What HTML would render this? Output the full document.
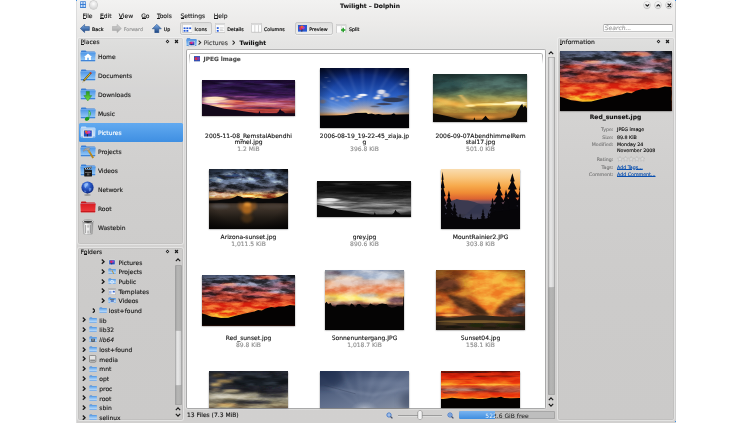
<!DOCTYPE html>
<html><head><meta charset="utf-8"><title>Twilight – Dolphin</title><style>
html,body{margin:0;padding:0;background:#fff}
body{-webkit-text-stroke:.12px currentColor;width:752px;height:423px;position:relative;overflow:hidden;font-family:"DejaVu Sans","Liberation Sans",sans-serif;font-size:6px;color:#161616;line-height:7px}
div,span,svg{position:absolute;box-sizing:border-box}
.t{white-space:nowrap;height:7px;line-height:7px}
.c{text-align:center}
.g{color:#8a8a8a}
.tb{font-size:4.75px;-webkit-text-stroke:.2px currentColor;color:#101010}
.in{font-size:4.9px}
u{text-decoration:underline;text-decoration-thickness:.45px;text-underline-offset:.3px}
#win{left:76.2px;top:0;width:599.9px;height:423px;background:linear-gradient(#f2f2f1 0,#ecebea 22px,#e4e4e3 45px,#dbdad9 100px,#d5d4d3 190px,#d2d1d0 300px,#d1d0cf 423px);border-left:.6px solid #dcdcdc;border-right:1.3px solid #cfcfcf}
.panel{border:.7px solid rgba(255,255,255,.45);border-radius:3px;box-shadow:0 0 0 .5px rgba(0,0,0,.1) inset;background:rgba(0,0,0,.027)}
.sel{background:linear-gradient(#62aaf0,#3f8fe2);border-radius:1.5px}
.pl{left:97px;color:#141414}
.thumb{box-shadow:0 0.5px 1.5px rgba(0,0,0,.55)}
.fn{width:112px;text-align:center;line-height:6.6px;color:#111}
.fn .g{position:static;color:#8c8c8c}
.lbl{right:138.6px;text-align:right;color:#777;white-space:nowrap;font-size:4.7px;line-height:6px}
.val{left:617px;white-space:nowrap;font-size:4.75px;line-height:6px;color:#111;-webkit-text-stroke:.15px currentColor}
a{color:#0a50b0;text-decoration:underline;text-decoration-thickness:.35px;text-underline-offset:.4px}
</style></head><body>
<div id="win"></div>
<div style="left:76px;top:0;width:1.4px;height:1.4px;background:#3a8ee6"></div><div style="left:675px;top:420.6px;width:1.2px;height:1.6px;background:#3a8ee6"></div><div style="left:675px;top:0;width:1.2px;height:1.4px;background:#3a8ee6"></div>
<div class="t " style="left:340px;top:2.00px;font-weight:bold;width:60px;text-align:center">Twilight – Dolphin</div>
<svg style="left:79.5px;top:1.3px" width="6" height="7.2" viewBox="0 0 13 15"><rect x="0" y="0" width="13" height="15" rx="1.5" fill="#3b7fd4"/><rect x="1.5" y="2" width="4" height="4" fill="#dbe9fb"/><rect x="7.5" y="2" width="4" height="4" fill="#dbe9fb"/><rect x="1.5" y="8.5" width="4" height="4" fill="#dbe9fb"/><rect x="7.5" y="8.5" width="4" height="4" fill="#dbe9fb"/></svg>
<div style="left:89.9px;top:1.4px;width:7.4px;height:7.4px;border-radius:50%;background:radial-gradient(circle at 50% 35%,#fdfdfd,#d9d9d9 70%,#bdbdbd);box-shadow:0 0 0 .5px #b0b0b0"></div>
<div style="left:643.7px;top:1.8px;width:6.6px;height:6.6px;border-radius:50%;background:radial-gradient(circle at 50% 30%,#fbfbfb,#e0e0e0 75%,#cdcdcd);box-shadow:0 0 0 .5px #bdbdbd,0 .8px .8px rgba(0,0,0,.25)"></div>
<svg style="left:643.7px;top:1.8px" width="6.6" height="6.6" viewBox="-3.6 -3.6 7.2 7.2"><path d="M-1.5,-0.6 L0,0.9 L1.5,-0.6" fill="none" stroke="#262626" stroke-width="1.35" stroke-linecap="round" stroke-linejoin="round"/></svg>
<div style="left:654.9000000000001px;top:1.8px;width:6.6px;height:6.6px;border-radius:50%;background:radial-gradient(circle at 50% 30%,#fbfbfb,#e0e0e0 75%,#cdcdcd);box-shadow:0 0 0 .5px #bdbdbd,0 .8px .8px rgba(0,0,0,.25)"></div>
<svg style="left:654.9000000000001px;top:1.8px" width="6.6" height="6.6" viewBox="-3.6 -3.6 7.2 7.2"><path d="M-1.5,0.7 L0,-0.8 L1.5,0.7" fill="none" stroke="#262626" stroke-width="1.35" stroke-linecap="round" stroke-linejoin="round"/></svg>
<div style="left:665.9000000000001px;top:1.8px;width:6.6px;height:6.6px;border-radius:50%;background:radial-gradient(circle at 50% 30%,#fbfbfb,#e0e0e0 75%,#cdcdcd);box-shadow:0 0 0 .5px #bdbdbd,0 .8px .8px rgba(0,0,0,.25)"></div>
<svg style="left:665.9000000000001px;top:1.8px" width="6.6" height="6.6" viewBox="-3.6 -3.6 7.2 7.2"><path d="M-1.4,-1.4 L1.4,1.4 M1.4,-1.4 L-1.4,1.4" fill="none" stroke="#262626" stroke-width="1.35" stroke-linecap="round" stroke-linejoin="round"/></svg>
<div class="t " style="left:82.5px;top:12.10px;">File</div>
<div style="left:82.80px;top:18.45px;width:2.95px;height:.5px;background:#161616"></div>
<div class="t " style="left:100px;top:12.10px;">Edit</div>
<div style="left:100.30px;top:18.45px;width:3.30px;height:.5px;background:#161616"></div>
<div class="t " style="left:118.8px;top:12.10px;">View</div>
<div style="left:119.10px;top:18.45px;width:3.60px;height:.5px;background:#161616"></div>
<div class="t " style="left:141.2px;top:12.10px;">Go</div>
<div style="left:141.50px;top:18.45px;width:4.15px;height:.5px;background:#161616"></div>
<div class="t " style="left:157px;top:12.10px;">Tools</div>
<div style="left:157.30px;top:18.45px;width:3.17px;height:.5px;background:#161616"></div>
<div class="t " style="left:180.5px;top:12.10px;">Settings</div>
<div style="left:180.80px;top:18.45px;width:3.30px;height:.5px;background:#161616"></div>
<div class="t " style="left:213.8px;top:12.10px;">Help</div>
<div style="left:214.10px;top:18.45px;width:4.00px;height:.5px;background:#161616"></div>
<svg style="left:80px;top:23.8px" width="9.7" height="9" viewBox="0 0 9.7 9"><defs><linearGradient id="gleft" x1="0" y1="0" x2="0" y2="1"><stop offset="0" stop-color="#7fb0ea"/><stop offset="1" stop-color="#17407f"/></linearGradient></defs><path d="M0.3,4.5 L4.6,0.4 L4.6,2.6 L9.4,2.6 L9.4,6.4 L4.6,6.4 L4.6,8.6 Z" fill="url(#gleft)" stroke="#17407f" stroke-width="0.5" stroke-linejoin="round"/></svg>
<div class="t tb" style="left:92px;top:25.80px;">Back</div>
<svg style="left:112px;top:23.8px" width="9.7" height="9" viewBox="0 0 9.7 9"><defs><linearGradient id="gright" x1="0" y1="0" x2="0" y2="1"><stop offset="0" stop-color="#d6d6d6"/><stop offset="1" stop-color="#a2a2a2"/></linearGradient></defs><path d="M9.4,4.5 L5.1,0.4 L5.1,2.6 L0.3,2.6 L0.3,6.4 L5.1,6.4 L5.1,8.6 Z" fill="url(#gright)" stroke="#a2a2a2" stroke-width="0.5" stroke-linejoin="round"/></svg>
<div class="t tb g" style="left:123.8px;top:25.80px;color:#9a9a9a">Forward</div>
<svg style="left:152px;top:23.8px" width="9.7" height="9" viewBox="0 0 9.7 9"><defs><linearGradient id="gup" x1="0" y1="0" x2="0" y2="1"><stop offset="0" stop-color="#7fb0ea"/><stop offset="1" stop-color="#17407f"/></linearGradient></defs><path d="M4.8,0.3 L9.3,4.8 L6.8,4.8 L6.8,8.8 L2.8,8.8 L2.8,4.8 L0.3,4.8 Z" fill="url(#gup)" stroke="#17407f" stroke-width="0.5" stroke-linejoin="round"/></svg>
<div class="t tb" style="left:163.8px;top:25.80px;">Up</div>
<div style="left:180.4px;top:21.6px;width:31.2px;height:13.1px;border:.6px solid #c6c6c6;border-radius:2.2px;background:linear-gradient(#dddddc,#e9e9e8 60%,#ececeb);box-shadow:0 .6px 0 rgba(255,255,255,.7)"></div>
<svg style="left:181.7px;top:23.1px" width="10.6" height="9.9" viewBox="0 0 10.6 9.9"><rect x=".3" y=".3" width="10.0" height="9.3" rx=".6" fill="#fdfdfd" stroke="#ababab" stroke-width=".6"/><rect x=".6" y=".6" width="9.4" height="1.5" fill="#d9d9d9"/><rect x="1.6" y="4.4" width="1.9" height="1.7" fill="#1f56d8"/><rect x="4.4" y="4.4" width="1.9" height="1.7" fill="#1f56d8"/><rect x="7.2" y="4.4" width="1.9" height="1.7" fill="#1f56d8"/><rect x="1.6" y="7" width="1.9" height="1.7" fill="#1f56d8"/><rect x="4.4" y="7" width="1.9" height="1.7" fill="#1f56d8"/></svg>
<div class="t tb" style="left:194.5px;top:25.80px;">Icons</div>
<svg style="left:215px;top:23.1px" width="10.4" height="9.9" viewBox="0 0 10.4 9.9"><rect x=".3" y=".3" width="9.8" height="9.3" rx=".6" fill="#fdfdfd" stroke="#ababab" stroke-width=".6"/><rect x=".6" y=".6" width="9.200000000000001" height="1.5" fill="#d9d9d9"/><rect x="1.8" y="4.2" width="1.9" height="1.7" fill="#1f56d8"/><rect x="1.8" y="7" width="1.9" height="1.7" fill="#1f56d8"/><rect x="4.8" y="4.6" width="3.8" height=".7" fill="#b8b8b8"/><rect x="4.8" y="6" width="3" height=".6" fill="#cfcfcf"/><rect x="4.8" y="7.4" width="3.8" height=".7" fill="#b8b8b8"/></svg>
<div class="t tb" style="left:227.2px;top:25.80px;">Details</div>
<svg style="left:251.4px;top:23.4px" width="10.9" height="9.6" viewBox="0 0 10.9 9.6"><rect x=".3" y=".3" width="10.3" height="9.0" rx=".6" fill="#fdfdfd" stroke="#ababab" stroke-width=".6"/><rect x=".6" y=".6" width="9.700000000000001" height="1.5" fill="#d9d9d9"/><rect x="3.6" y="2.1" width=".6" height="7.2" fill="#bdbdbd"/><rect x="7" y="2.1" width=".6" height="7.2" fill="#bdbdbd"/></svg>
<div class="t tb" style="left:264px;top:25.80px;">Columns</div>
<div style="left:295.4px;top:21.8px;width:37.5px;height:12.9px;border:.6px solid #c6c6c6;border-radius:2.2px;background:linear-gradient(#dddddc,#e9e9e8 60%,#ececeb);box-shadow:0 .6px 0 rgba(255,255,255,.7)"></div>
<svg style="left:297.5px;top:24.6px" width="9.2" height="7.8" viewBox="0 0 9.2 7.8"><rect width="9.2" height="7.8" fill="#2858d0"/><rect y="6.6" width="9.2" height="1.2" fill="#dfe6f4"/><circle cx="3" cy="3" r="1.9" fill="#d8305a"/><circle cx="5.2" cy="2.6" r="1.7" fill="#b838b8"/><circle cx="4" cy="1.8" r="1.2" fill="#e8682a"/><path d="M4,4.4L3.8,6.8" stroke="#2a1414" stroke-width=".7"/></svg>
<div class="t tb" style="left:309.2px;top:25.80px;">Preview</div>
<svg style="left:336.4px;top:23.5px" width="10.2" height="9.6" viewBox="0 0 10.2 9.6"><rect x=".3" y=".3" width="9.6" height="9.0" rx=".6" fill="#fdfdfd" stroke="#ababab" stroke-width=".6"/><rect x=".6" y=".6" width="9.0" height="1.5" fill="#d9d9d9"/><rect x="4.9" y="2.1" width=".6" height="7.2" fill="#c4c4c4"/><path d="M7.2,3.8V8.2M5,6H9.4" stroke="#1f9a22" stroke-width="1.4"/></svg>
<div class="t tb" style="left:348.9px;top:25.80px;">Split</div>
<div style="left:603.2px;top:24px;width:69.5px;height:8.2px;background:#fff;border:.6px solid #c4c4c4;border-top-color:#a4a4a4;border-radius:1.5px;box-shadow:0 .5px 0 #f4f4f4"></div>
<div class="t g" style="left:604.8px;top:24.30px;font-style:italic;color:#9a9a9a">Search...</div>
<div class="panel" style="left:77.4px;top:37.2px;width:106.4px;height:208px"></div>
<div class="t " style="left:80.5px;top:38.30px;">Places</div>
<div style="left:80.80px;top:44.45px;width:3.10px;height:.5px;background:#161616"></div>
<svg style="left:165.0px;top:39.3px;filter:drop-shadow(0 .6px .5px rgba(255,255,255,.95))" width="5" height="5" viewBox="-2.5 -2.5 5 5"><path d="M0,-1.9L1.9,0L0,1.9L-1.9,0Z" fill="#2a2a2a"/><circle r=".6" fill="#e6e6e6"/></svg>
<svg style="left:174.0px;top:39.3px;filter:drop-shadow(0 .6px .5px rgba(255,255,255,.95))" width="5" height="5" viewBox="-2.5 -2.5 5 5"><path d="M-1.5,-1.5L1.5,1.5M1.5,-1.5L-1.5,1.5" stroke="#1e1e1e" stroke-width="1.1"/><rect x="-.8" y="-.8" width="1.6" height="1.6" fill="#1e1e1e"/></svg>
<div class="sel" style="left:78.8px;top:123px;width:103.8px;height:18.8px"></div>
<svg style="left:80.4px;top:50.0px" width="16" height="14.4" viewBox="0 0 16 14.4"><defs><linearGradient id="fg1" x1="0" y1="0" x2="0" y2="1"><stop offset="0" stop-color="#4a94e6"/><stop offset="1" stop-color="#9ccdf8"/></linearGradient></defs><path d="M1,1.3Q1,.4 1.9,.4L5.6,.4L6.6,1.5L14.3,1.5Q15.2,1.5 15.2,2.3L15.2,4L1,4Z" fill="#3a7fd6"/><path d="M.4,2.9Q.4,2.3 1,2.3L15,2.3Q15.6,2.3 15.6,2.9L15.2,10.7Q15.2,11.3 14.6,11.3L1.4,11.3Q.8,11.3 .8,10.7Z" fill="url(#fg1)"/><path d="M.82,10.1L15.18,10.1L15.2,10.7Q15.2,11.3 14.6,11.3L1.4,11.3Q.8,11.3 .8,10.7Z" fill="#3f84d8"/><path d="M.5,2.5H15.5" stroke="#b4d6f8" stroke-width=".5" opacity=".7"/><path d="M8,3.6L12,7H10.9V10H9V7.8H7V10H5.1V7H4Z" fill="#fff"/></svg>
<div class="t " style="left:97.9px;top:53.40px;">Home</div>
<svg style="left:80.4px;top:69.0px" width="16" height="14.4" viewBox="0 0 16 14.4"><defs><linearGradient id="fg2" x1="0" y1="0" x2="0" y2="1"><stop offset="0" stop-color="#4a94e6"/><stop offset="1" stop-color="#9ccdf8"/></linearGradient></defs><path d="M1,1.3Q1,.4 1.9,.4L5.6,.4L6.6,1.5L14.3,1.5Q15.2,1.5 15.2,2.3L15.2,4L1,4Z" fill="#3a7fd6"/><path d="M.4,2.9Q.4,2.3 1,2.3L15,2.3Q15.6,2.3 15.6,2.9L15.2,10.7Q15.2,11.3 14.6,11.3L1.4,11.3Q.8,11.3 .8,10.7Z" fill="url(#fg2)"/><path d="M.82,10.1L15.18,10.1L15.2,10.7Q15.2,11.3 14.6,11.3L1.4,11.3Q.8,11.3 .8,10.7Z" fill="#3f84d8"/><path d="M.5,2.5H15.5" stroke="#b4d6f8" stroke-width=".5" opacity=".7"/><path d="M2.6,13.4L3.6,10.6L10,3.4L11.4,4.6L5,11.8Z" fill="#3a2c10"/><path d="M3.9,10.9L10,4L10.8,4.7L4.7,11.6Z" fill="#e8c428"/><path d="M9.6,3.8L10.4,2.9L11.9,4.1L11.1,5Z" fill="#d82a20"/><path d="M2.6,13.4L3.2,11.6L4.2,12.4Z" fill="#e8d8a0"/></svg>
<div class="t " style="left:97.9px;top:72.40px;">Documents</div>
<svg style="left:80.4px;top:87.89999999999999px" width="16" height="14.4" viewBox="0 0 16 14.4"><defs><linearGradient id="fg3" x1="0" y1="0" x2="0" y2="1"><stop offset="0" stop-color="#4a94e6"/><stop offset="1" stop-color="#9ccdf8"/></linearGradient></defs><path d="M1,1.3Q1,.4 1.9,.4L5.6,.4L6.6,1.5L14.3,1.5Q15.2,1.5 15.2,2.3L15.2,4L1,4Z" fill="#3a7fd6"/><path d="M.4,2.9Q.4,2.3 1,2.3L15,2.3Q15.6,2.3 15.6,2.9L15.2,10.7Q15.2,11.3 14.6,11.3L1.4,11.3Q.8,11.3 .8,10.7Z" fill="url(#fg3)"/><path d="M.82,10.1L15.18,10.1L15.2,10.7Q15.2,11.3 14.6,11.3L1.4,11.3Q.8,11.3 .8,10.7Z" fill="#3f84d8"/><path d="M.5,2.5H15.5" stroke="#b4d6f8" stroke-width=".5" opacity=".7"/><defs><linearGradient id="dlg" x1="0" y1="0" x2="0" y2="1"><stop offset="0" stop-color="#2a961c"/><stop offset="1" stop-color="#74e048"/></linearGradient></defs><path d="M6.2,3.4H9.4V7.6H11.8L7.8,13L3.8,7.6H6.2Z" fill="url(#dlg)" stroke="#1f8414" stroke-width=".4"/></svg>
<div class="t " style="left:97.9px;top:91.30px;">Downloads</div>
<svg style="left:80.4px;top:106.8px" width="16" height="14.4" viewBox="0 0 16 14.4"><defs><linearGradient id="fg4" x1="0" y1="0" x2="0" y2="1"><stop offset="0" stop-color="#4a94e6"/><stop offset="1" stop-color="#9ccdf8"/></linearGradient></defs><path d="M1,1.3Q1,.4 1.9,.4L5.6,.4L6.6,1.5L14.3,1.5Q15.2,1.5 15.2,2.3L15.2,4L1,4Z" fill="#3a7fd6"/><path d="M.4,2.9Q.4,2.3 1,2.3L15,2.3Q15.6,2.3 15.6,2.9L15.2,10.7Q15.2,11.3 14.6,11.3L1.4,11.3Q.8,11.3 .8,10.7Z" fill="url(#fg4)"/><path d="M.82,10.1L15.18,10.1L15.2,10.7Q15.2,11.3 14.6,11.3L1.4,11.3Q.8,11.3 .8,10.7Z" fill="#3f84d8"/><path d="M.5,2.5H15.5" stroke="#b4d6f8" stroke-width=".5" opacity=".7"/><path d="M8.6,3.2L9.4,3.2Q11.6,5.6 10.4,9.2Q10.2,6.8 9.4,6.2L9.4,11.6A2.2,1.7 -20 1 1 8.6,10.2Z" fill="#2fae2f"/><path d="M8.9,4Q10.6,6 10,8.4Q9.8,6.4 8.9,5.8Z" fill="#a8ecA0"/><ellipse cx="7" cy="12" rx="2.2" ry="1.6" transform="rotate(-20 7 12)" fill="#1f9a1f"/></svg>
<div class="t " style="left:97.9px;top:110.20px;">Music</div>
<svg style="left:80.4px;top:125.69999999999999px" width="16" height="14.4" viewBox="0 0 16 14.4"><defs><linearGradient id="fg5" x1="0" y1="0" x2="0" y2="1"><stop offset="0" stop-color="#a8cef6"/><stop offset="1" stop-color="#d4e8fc"/></linearGradient></defs><path d="M1,1.3Q1,.4 1.9,.4L5.6,.4L6.6,1.5L14.3,1.5Q15.2,1.5 15.2,2.3L15.2,4L1,4Z" fill="#c4ddf8"/><path d="M.4,2.9Q.4,2.3 1,2.3L15,2.3Q15.6,2.3 15.6,2.9L15.2,10.7Q15.2,11.3 14.6,11.3L1.4,11.3Q.8,11.3 .8,10.7Z" fill="url(#fg5)"/><path d="M.82,10.1L15.18,10.1L15.2,10.7Q15.2,11.3 14.6,11.3L1.4,11.3Q.8,11.3 .8,10.7Z" fill="#9cc4f2"/><path d="M.5,2.5H15.5" stroke="#b4d6f8" stroke-width=".5" opacity=".7"/><rect x="3" y="3.6" width="9.6" height="8" fill="#fafafa" stroke="#b8c4d4" stroke-width=".3"/><rect x="3.8" y="4.4" width="8" height="6.2" fill="#2450bc"/><circle cx="7" cy="6.6" r="1.7" fill="#e0306a"/><circle cx="9" cy="6.2" r="1.5" fill="#c040c8"/><circle cx="6" cy="5.6" r="1.1" fill="#e86a28"/><path d="M7.6,8L7.4,10.4" stroke="#301818" stroke-width=".7"/></svg>
<div class="t " style="left:97.9px;top:129.10px;color:#fff">Pictures</div>
<svg style="left:80.4px;top:144.6px" width="16" height="14.4" viewBox="0 0 16 14.4"><defs><linearGradient id="fg6" x1="0" y1="0" x2="0" y2="1"><stop offset="0" stop-color="#4a94e6"/><stop offset="1" stop-color="#9ccdf8"/></linearGradient></defs><path d="M1,1.3Q1,.4 1.9,.4L5.6,.4L6.6,1.5L14.3,1.5Q15.2,1.5 15.2,2.3L15.2,4L1,4Z" fill="#3a7fd6"/><path d="M.4,2.9Q.4,2.3 1,2.3L15,2.3Q15.6,2.3 15.6,2.9L15.2,10.7Q15.2,11.3 14.6,11.3L1.4,11.3Q.8,11.3 .8,10.7Z" fill="url(#fg6)"/><path d="M.82,10.1L15.18,10.1L15.2,10.7Q15.2,11.3 14.6,11.3L1.4,11.3Q.8,11.3 .8,10.7Z" fill="#3f84d8"/><path d="M.5,2.5H15.5" stroke="#b4d6f8" stroke-width=".5" opacity=".7"/><path d="M7.4,5.2L8.8,4.2L14,12.6L12.4,13.6Z" fill="#b8861e"/><path d="M7.4,5.2L8.8,4.2L10.4,6.8L9,7.8Z" fill="#caa040"/><path d="M3,5.6Q5.4,2.6 9.4,2.6L10,3.6L8,6L6.4,5Q4.6,5.2 3.6,6.4Z" fill="#a8a8a8" stroke="#6a6a6a" stroke-width=".3"/></svg>
<div class="t " style="left:97.9px;top:148.00px;">Projects</div>
<svg style="left:80.4px;top:163.5px" width="16" height="14.4" viewBox="0 0 16 14.4"><defs><linearGradient id="fg7" x1="0" y1="0" x2="0" y2="1"><stop offset="0" stop-color="#4a94e6"/><stop offset="1" stop-color="#9ccdf8"/></linearGradient></defs><path d="M1,1.3Q1,.4 1.9,.4L5.6,.4L6.6,1.5L14.3,1.5Q15.2,1.5 15.2,2.3L15.2,4L1,4Z" fill="#3a7fd6"/><path d="M.4,2.9Q.4,2.3 1,2.3L15,2.3Q15.6,2.3 15.6,2.9L15.2,10.7Q15.2,11.3 14.6,11.3L1.4,11.3Q.8,11.3 .8,10.7Z" fill="url(#fg7)"/><path d="M.82,10.1L15.18,10.1L15.2,10.7Q15.2,11.3 14.6,11.3L1.4,11.3Q.8,11.3 .8,10.7Z" fill="#3f84d8"/><path d="M.5,2.5H15.5" stroke="#b4d6f8" stroke-width=".5" opacity=".7"/><rect x="4.2" y="5.8" width="7.8" height="6.6" rx=".4" fill="#181818"/><path d="M3.8,4.2L11.4,2.4L11.9,4.2L4.3,6Z" fill="#181818"/><path d="M5.2,3.9L6,5.6M7,3.5L7.8,5.2M8.8,3.1L9.6,4.8M10.6,2.7L11.2,4.3" stroke="#f4f4f4" stroke-width=".8"/><rect x="5" y="8" width="6.2" height=".7" fill="#8a8a8a"/><rect x="7" y="9.4" width="2.4" height="2" fill="#5a5a5a"/></svg>
<div class="t " style="left:97.9px;top:166.90px;">Videos</div>
<svg style="left:81.4px;top:181.2px" width="13" height="15" viewBox="0 0 13 15"><defs><radialGradient id="gl" cx=".42" cy=".3" r=".75"><stop offset="0" stop-color="#6ea4f4"/><stop offset=".45" stop-color="#2452c0"/><stop offset="1" stop-color="#0c2478"/></radialGradient></defs><ellipse cx="6.5" cy="14" rx="3.4" ry=".7" fill="#7a7a7a" opacity=".8"/><rect x="5.8" y="12.2" width="1.4" height="1.6" fill="#9a9a9a"/><circle cx="6.5" cy="6.5" r="6.1" fill="url(#gl)"/><path d="M3.2,3.4Q5,1.6 7,2.2Q7.8,3.6 6.2,4.8Q4.8,5.4 4.6,7.2Q3.2,6.2 3.2,3.4Z" fill="#a8ccff" opacity=".7"/><path d="M7.8,6.8Q9.8,6.4 10.6,7.8Q10,10 8.4,10.6Q7.4,9 7.8,6.8Z" fill="#8cbcff" opacity=".55"/><path d="M3,9.6Q4.6,9.4 5.4,10.8Q4.8,11.8 3.8,11.4Z" fill="#8cbcff" opacity=".5"/></svg>
<div class="t " style="left:97.9px;top:185.80px;">Network</div>
<svg style="left:80.4px;top:201.29999999999998px" width="16" height="14.4" viewBox="0 0 16 14.4"><defs><linearGradient id="fg8" x1="0" y1="0" x2="0" y2="1"><stop offset="0" stop-color="#d81c22"/><stop offset="1" stop-color="#ee3a3c"/></linearGradient></defs><path d="M1,1.3Q1,.4 1.9,.4L5.6,.4L6.6,1.5L14.3,1.5Q15.2,1.5 15.2,2.3L15.2,4L1,4Z" fill="#c8141a"/><path d="M.4,2.9Q.4,2.3 1,2.3L15,2.3Q15.6,2.3 15.6,2.9L15.2,10.7Q15.2,11.3 14.6,11.3L1.4,11.3Q.8,11.3 .8,10.7Z" fill="url(#fg8)"/><path d="M.82,10.1L15.18,10.1L15.2,10.7Q15.2,11.3 14.6,11.3L1.4,11.3Q.8,11.3 .8,10.7Z" fill="#c8181c"/><path d="M.5,2.5H15.5" stroke="#b4d6f8" stroke-width=".5" opacity=".7"/></svg>
<div class="t " style="left:97.9px;top:204.70px;">Root</div>
<svg style="left:82.4px;top:219.4px" width="12" height="16" viewBox="0 0 12 16"><defs><linearGradient id="wb" x1="0" x2="1" y1="0" y2="0"><stop offset="0" stop-color="#a8a8a8"/><stop offset=".3" stop-color="#fbfbfb"/><stop offset=".65" stop-color="#d8d8d8"/><stop offset="1" stop-color="#8a8a8a"/></linearGradient></defs><path d="M.8,2.6L11.2,2.6L10.2,15Q6,16 1.8,15Z" fill="url(#wb)" stroke="#8a8a8a" stroke-width=".4"/><ellipse cx="6" cy="2.6" rx="5.4" ry="1.8" fill="#ececec" stroke="#6a6a6a" stroke-width=".5"/><ellipse cx="6" cy="2.8" rx="4.2" ry="1.1" fill="#3a3a3a"/><path d="M3.6,6V14M6,6.2V14.4M8.4,6V14" stroke="#8a8a8a" stroke-width=".8"/><rect x="4.8" y="8.6" width="2.4" height="3" fill="#fff" opacity=".7"/></svg>
<div class="t " style="left:97.9px;top:223.60px;">Wastebin</div>
<div class="panel" style="left:77.4px;top:246.6px;width:106.4px;height:174.8px"></div>
<div class="t " style="left:80.5px;top:248.00px;">Folders</div>
<div style="left:84.25px;top:254.45px;width:3.17px;height:.5px;background:#161616"></div>
<svg style="left:165.0px;top:249.0px;filter:drop-shadow(0 .6px .5px rgba(255,255,255,.95))" width="5" height="5" viewBox="-2.5 -2.5 5 5"><path d="M0,-1.9L1.9,0L0,1.9L-1.9,0Z" fill="#2a2a2a"/><circle r=".6" fill="#e6e6e6"/></svg>
<svg style="left:174.0px;top:249.0px;filter:drop-shadow(0 .6px .5px rgba(255,255,255,.95))" width="5" height="5" viewBox="-2.5 -2.5 5 5"><path d="M-1.5,-1.5L1.5,1.5M1.5,-1.5L-1.5,1.5" stroke="#1e1e1e" stroke-width="1.1"/><rect x="-.8" y="-.8" width="1.6" height="1.6" fill="#1e1e1e"/></svg>
<svg style="left:101.2px;top:259.3px" width="3.9" height="5.4" viewBox="0 0 3.4 4.8"><path d="M.7,.5L2.7,2.4L.7,4.3" fill="none" stroke="#1c1c1c" stroke-width="1.15"/></svg>
<svg style="left:108.2px;top:258.5px" width="8" height="7" viewBox="0 0 16 14"><rect x=".6" y=".6" width="14.8" height="12.8" rx="1" fill="#f4f4f4" stroke="#a8a8a8" stroke-width=".9"/><rect x="2.4" y="2.4" width="11.2" height="8.6" fill="#2450bc"/><circle cx="6.6" cy="5.6" r="2.6" fill="#d82a5a"/><circle cx="9.8" cy="5.2" r="2.2" fill="#a83ac0"/><path d="M7.6,8L7.4,11" stroke="#301818" stroke-width="1.2"/></svg>
<div class="t " style="left:118.5px;top:258.50px;">Pictures</div>
<svg style="left:101.2px;top:269.05px" width="3.9" height="5.4" viewBox="0 0 3.4 4.8"><path d="M.7,.5L2.7,2.4L.7,4.3" fill="none" stroke="#1c1c1c" stroke-width="1.15"/></svg>
<svg style="left:108px;top:268.45px" width="8.2" height="6.6" viewBox="0 0 16 12"><defs><linearGradient id="fg9" x1="0" y1="0" x2="0" y2="1"><stop offset="0" stop-color="#62a6ec"/><stop offset="1" stop-color="#d2e8fc"/></linearGradient></defs><path d="M1,1.3Q1,.4 1.9,.4L5.6,.4L6.6,1.5L14.3,1.5Q15.2,1.5 15.2,2.3L15.2,4L1,4Z" fill="#3a7fd6"/><path d="M.4,2.9Q.4,2.3 1,2.3L15,2.3Q15.6,2.3 15.6,2.9L15.2,10.7Q15.2,11.3 14.6,11.3L1.4,11.3Q.8,11.3 .8,10.7Z" fill="url(#fg9)"/><path d="M.82,10.1L15.18,10.1L15.2,10.7Q15.2,11.3 14.6,11.3L1.4,11.3Q.8,11.3 .8,10.7Z" fill="#3f84d8"/><path d="M.5,2.5H15.5" stroke="#b4d6f8" stroke-width=".5" opacity=".7"/><path d="M3.4,4.6Q5.4,2.6 8.6,2.8L9,3.8L7.2,5.6L6,4.8Q4.6,5 4,5.8Z" fill="#c8c8c8" stroke="#6a6a6a" stroke-width=".4"/><path d="M7.2,5L8.6,4.2L12,10.4L10.6,11.2Z" fill="#b8861e"/></svg>
<div class="t " style="left:118.5px;top:268.25px;">Projects</div>
<svg style="left:101.2px;top:278.6px" width="3.9" height="5.4" viewBox="0 0 3.4 4.8"><path d="M.7,.5L2.7,2.4L.7,4.3" fill="none" stroke="#1c1c1c" stroke-width="1.15"/></svg>
<svg style="left:108px;top:278.0px" width="8.2" height="6.6" viewBox="0 0 16 12"><defs><linearGradient id="fg10" x1="0" y1="0" x2="0" y2="1"><stop offset="0" stop-color="#62a6ec"/><stop offset="1" stop-color="#d2e8fc"/></linearGradient></defs><path d="M1,1.3Q1,.4 1.9,.4L5.6,.4L6.6,1.5L14.3,1.5Q15.2,1.5 15.2,2.3L15.2,4L1,4Z" fill="#3a7fd6"/><path d="M.4,2.9Q.4,2.3 1,2.3L15,2.3Q15.6,2.3 15.6,2.9L15.2,10.7Q15.2,11.3 14.6,11.3L1.4,11.3Q.8,11.3 .8,10.7Z" fill="url(#fg10)"/><path d="M.82,10.1L15.18,10.1L15.2,10.7Q15.2,11.3 14.6,11.3L1.4,11.3Q.8,11.3 .8,10.7Z" fill="#3f84d8"/><path d="M.5,2.5H15.5" stroke="#b4d6f8" stroke-width=".5" opacity=".7"/><circle cx="8" cy="7" r="2.9" fill="none" stroke="#eef5ff" stroke-width="1.5"/><circle cx="8" cy="7" r=".9" fill="#eef5ff"/></svg>
<div class="t " style="left:118.5px;top:277.80px;">Public</div>
<svg style="left:101.2px;top:288.3px" width="3.9" height="5.4" viewBox="0 0 3.4 4.8"><path d="M.7,.5L2.7,2.4L.7,4.3" fill="none" stroke="#1c1c1c" stroke-width="1.15"/></svg>
<svg style="left:108.2px;top:287.5px" width="8" height="7" viewBox="0 0 16 14"><rect x=".6" y=".6" width="14.8" height="12.8" rx="1" fill="#f8f8f8" stroke="#8a8a8a" stroke-width=".9"/><rect x="1.2" y="1.2" width="13.6" height="2.2" fill="#9a9a9a"/><path d="M4,5.4V11.4" stroke="#3a6ad0" stroke-width="1.8"/><path d="M7.4,5.4V11.4" stroke="#9cbcf0" stroke-width="1.4"/><rect x="9.6" y="5.6" width="4" height="3.4" fill="#3a6ad0"/></svg>
<div class="t " style="left:118.5px;top:287.50px;">Templates</div>
<svg style="left:101.2px;top:298.05px" width="3.9" height="5.4" viewBox="0 0 3.4 4.8"><path d="M.7,.5L2.7,2.4L.7,4.3" fill="none" stroke="#1c1c1c" stroke-width="1.15"/></svg>
<svg style="left:108px;top:297.45px" width="8.2" height="6.6" viewBox="0 0 16 12"><defs><linearGradient id="fg11" x1="0" y1="0" x2="0" y2="1"><stop offset="0" stop-color="#62a6ec"/><stop offset="1" stop-color="#d2e8fc"/></linearGradient></defs><path d="M1,1.3Q1,.4 1.9,.4L5.6,.4L6.6,1.5L14.3,1.5Q15.2,1.5 15.2,2.3L15.2,4L1,4Z" fill="#3a7fd6"/><path d="M.4,2.9Q.4,2.3 1,2.3L15,2.3Q15.6,2.3 15.6,2.9L15.2,10.7Q15.2,11.3 14.6,11.3L1.4,11.3Q.8,11.3 .8,10.7Z" fill="url(#fg11)"/><path d="M.82,10.1L15.18,10.1L15.2,10.7Q15.2,11.3 14.6,11.3L1.4,11.3Q.8,11.3 .8,10.7Z" fill="#3f84d8"/><path d="M.5,2.5H15.5" stroke="#b4d6f8" stroke-width=".5" opacity=".7"/><rect x="4" y="4.4" width="8.4" height="6" fill="#e8e8e8"/><rect x="5" y="5.4" width="6.4" height="4" fill="#5a84cc"/><path d="M4,4.2L12.4,4.2" stroke="#2a2a2a" stroke-width="1.2"/></svg>
<div class="t " style="left:118.5px;top:297.25px;">Videos</div>
<svg style="left:91.6px;top:307.8px" width="3.9" height="5.4" viewBox="0 0 3.4 4.8"><path d="M.7,.5L2.7,2.4L.7,4.3" fill="none" stroke="#1c1c1c" stroke-width="1.15"/></svg>
<svg style="left:98.6px;top:307.2px" width="8.2" height="6.6" viewBox="0 0 16 12"><defs><linearGradient id="fg12" x1="0" y1="0" x2="0" y2="1"><stop offset="0" stop-color="#62a6ec"/><stop offset="1" stop-color="#d2e8fc"/></linearGradient></defs><path d="M1,1.3Q1,.4 1.9,.4L5.6,.4L6.6,1.5L14.3,1.5Q15.2,1.5 15.2,2.3L15.2,4L1,4Z" fill="#3a7fd6"/><path d="M.4,2.9Q.4,2.3 1,2.3L15,2.3Q15.6,2.3 15.6,2.9L15.2,10.7Q15.2,11.3 14.6,11.3L1.4,11.3Q.8,11.3 .8,10.7Z" fill="url(#fg12)"/><path d="M.82,10.1L15.18,10.1L15.2,10.7Q15.2,11.3 14.6,11.3L1.4,11.3Q.8,11.3 .8,10.7Z" fill="#3f84d8"/><path d="M.5,2.5H15.5" stroke="#b4d6f8" stroke-width=".5" opacity=".7"/></svg>
<div class="t " style="left:108.8px;top:307.00px;">lost+found</div>
<svg style="left:81.8px;top:317.3px" width="3.9" height="5.4" viewBox="0 0 3.4 4.8"><path d="M.7,.5L2.7,2.4L.7,4.3" fill="none" stroke="#1c1c1c" stroke-width="1.15"/></svg>
<svg style="left:88.8px;top:316.7px" width="8.2" height="6.6" viewBox="0 0 16 12"><defs><linearGradient id="fg13" x1="0" y1="0" x2="0" y2="1"><stop offset="0" stop-color="#62a6ec"/><stop offset="1" stop-color="#d2e8fc"/></linearGradient></defs><path d="M1,1.3Q1,.4 1.9,.4L5.6,.4L6.6,1.5L14.3,1.5Q15.2,1.5 15.2,2.3L15.2,4L1,4Z" fill="#3a7fd6"/><path d="M.4,2.9Q.4,2.3 1,2.3L15,2.3Q15.6,2.3 15.6,2.9L15.2,10.7Q15.2,11.3 14.6,11.3L1.4,11.3Q.8,11.3 .8,10.7Z" fill="url(#fg13)"/><path d="M.82,10.1L15.18,10.1L15.2,10.7Q15.2,11.3 14.6,11.3L1.4,11.3Q.8,11.3 .8,10.7Z" fill="#3f84d8"/><path d="M.5,2.5H15.5" stroke="#b4d6f8" stroke-width=".5" opacity=".7"/></svg>
<div class="t " style="left:99.3px;top:316.50px;">lib</div>
<svg style="left:81.8px;top:326.90000000000003px" width="3.9" height="5.4" viewBox="0 0 3.4 4.8"><path d="M.7,.5L2.7,2.4L.7,4.3" fill="none" stroke="#1c1c1c" stroke-width="1.15"/></svg>
<svg style="left:88.8px;top:326.3px" width="8.2" height="6.6" viewBox="0 0 16 12"><defs><linearGradient id="fg14" x1="0" y1="0" x2="0" y2="1"><stop offset="0" stop-color="#62a6ec"/><stop offset="1" stop-color="#d2e8fc"/></linearGradient></defs><path d="M1,1.3Q1,.4 1.9,.4L5.6,.4L6.6,1.5L14.3,1.5Q15.2,1.5 15.2,2.3L15.2,4L1,4Z" fill="#3a7fd6"/><path d="M.4,2.9Q.4,2.3 1,2.3L15,2.3Q15.6,2.3 15.6,2.9L15.2,10.7Q15.2,11.3 14.6,11.3L1.4,11.3Q.8,11.3 .8,10.7Z" fill="url(#fg14)"/><path d="M.82,10.1L15.18,10.1L15.2,10.7Q15.2,11.3 14.6,11.3L1.4,11.3Q.8,11.3 .8,10.7Z" fill="#3f84d8"/><path d="M.5,2.5H15.5" stroke="#b4d6f8" stroke-width=".5" opacity=".7"/></svg>
<div class="t " style="left:99.3px;top:326.10px;">lib32</div>
<svg style="left:81.8px;top:336.7px" width="3.9" height="5.4" viewBox="0 0 3.4 4.8"><path d="M.7,.5L2.7,2.4L.7,4.3" fill="none" stroke="#1c1c1c" stroke-width="1.15"/></svg>
<svg style="left:88.8px;top:336.09999999999997px" width="8.2" height="6.6" viewBox="0 0 16 12"><defs><linearGradient id="fg15" x1="0" y1="0" x2="0" y2="1"><stop offset="0" stop-color="#62a6ec"/><stop offset="1" stop-color="#d2e8fc"/></linearGradient></defs><path d="M1,1.3Q1,.4 1.9,.4L5.6,.4L6.6,1.5L14.3,1.5Q15.2,1.5 15.2,2.3L15.2,4L1,4Z" fill="#3a7fd6"/><path d="M.4,2.9Q.4,2.3 1,2.3L15,2.3Q15.6,2.3 15.6,2.9L15.2,10.7Q15.2,11.3 14.6,11.3L1.4,11.3Q.8,11.3 .8,10.7Z" fill="url(#fg15)"/><path d="M.82,10.1L15.18,10.1L15.2,10.7Q15.2,11.3 14.6,11.3L1.4,11.3Q.8,11.3 .8,10.7Z" fill="#3f84d8"/><path d="M.5,2.5H15.5" stroke="#b4d6f8" stroke-width=".5" opacity=".7"/><rect x="4.4" y="5" width="7" height="5.6" fill="#3a3a3a"/><rect x="5.4" y="6" width="5" height="2.6" fill="#9ab"/></svg>
<div class="t " style="left:99.3px;top:335.90px;font-style:italic">lib64</div>
<svg style="left:81.8px;top:346.6px" width="3.9" height="5.4" viewBox="0 0 3.4 4.8"><path d="M.7,.5L2.7,2.4L.7,4.3" fill="none" stroke="#1c1c1c" stroke-width="1.15"/></svg>
<svg style="left:88.8px;top:346.0px" width="8.2" height="6.6" viewBox="0 0 16 12"><defs><linearGradient id="fg16" x1="0" y1="0" x2="0" y2="1"><stop offset="0" stop-color="#62a6ec"/><stop offset="1" stop-color="#d2e8fc"/></linearGradient></defs><path d="M1,1.3Q1,.4 1.9,.4L5.6,.4L6.6,1.5L14.3,1.5Q15.2,1.5 15.2,2.3L15.2,4L1,4Z" fill="#3a7fd6"/><path d="M.4,2.9Q.4,2.3 1,2.3L15,2.3Q15.6,2.3 15.6,2.9L15.2,10.7Q15.2,11.3 14.6,11.3L1.4,11.3Q.8,11.3 .8,10.7Z" fill="url(#fg16)"/><path d="M.82,10.1L15.18,10.1L15.2,10.7Q15.2,11.3 14.6,11.3L1.4,11.3Q.8,11.3 .8,10.7Z" fill="#3f84d8"/><path d="M.5,2.5H15.5" stroke="#b4d6f8" stroke-width=".5" opacity=".7"/></svg>
<div class="t " style="left:99.3px;top:345.80px;">lost+found</div>
<svg style="left:81.8px;top:356.3px" width="3.9" height="5.4" viewBox="0 0 3.4 4.8"><path d="M.7,.5L2.7,2.4L.7,4.3" fill="none" stroke="#1c1c1c" stroke-width="1.15"/></svg>
<svg style="left:89.39999999999999px;top:355.2px" width="7.2" height="7.6" viewBox="0 0 7.2 7.6"><rect x=".4" y=".4" width="6.4" height="6.8" rx="1" fill="#e4e4e4" stroke="#555" stroke-width=".6"/><rect x="1.2" y="4.6" width="4.8" height="1.8" fill="#8a8a8a"/></svg>
<div class="t " style="left:99.3px;top:355.50px;">media</div>
<svg style="left:81.8px;top:366.1px" width="3.9" height="5.4" viewBox="0 0 3.4 4.8"><path d="M.7,.5L2.7,2.4L.7,4.3" fill="none" stroke="#1c1c1c" stroke-width="1.15"/></svg>
<svg style="left:88.8px;top:365.5px" width="8.2" height="6.6" viewBox="0 0 16 12"><defs><linearGradient id="fg17" x1="0" y1="0" x2="0" y2="1"><stop offset="0" stop-color="#62a6ec"/><stop offset="1" stop-color="#d2e8fc"/></linearGradient></defs><path d="M1,1.3Q1,.4 1.9,.4L5.6,.4L6.6,1.5L14.3,1.5Q15.2,1.5 15.2,2.3L15.2,4L1,4Z" fill="#3a7fd6"/><path d="M.4,2.9Q.4,2.3 1,2.3L15,2.3Q15.6,2.3 15.6,2.9L15.2,10.7Q15.2,11.3 14.6,11.3L1.4,11.3Q.8,11.3 .8,10.7Z" fill="url(#fg17)"/><path d="M.82,10.1L15.18,10.1L15.2,10.7Q15.2,11.3 14.6,11.3L1.4,11.3Q.8,11.3 .8,10.7Z" fill="#3f84d8"/><path d="M.5,2.5H15.5" stroke="#b4d6f8" stroke-width=".5" opacity=".7"/></svg>
<div class="t " style="left:99.3px;top:365.30px;">mnt</div>
<svg style="left:81.8px;top:375.8px" width="3.9" height="5.4" viewBox="0 0 3.4 4.8"><path d="M.7,.5L2.7,2.4L.7,4.3" fill="none" stroke="#1c1c1c" stroke-width="1.15"/></svg>
<svg style="left:88.8px;top:375.2px" width="8.2" height="6.6" viewBox="0 0 16 12"><defs><linearGradient id="fg18" x1="0" y1="0" x2="0" y2="1"><stop offset="0" stop-color="#62a6ec"/><stop offset="1" stop-color="#d2e8fc"/></linearGradient></defs><path d="M1,1.3Q1,.4 1.9,.4L5.6,.4L6.6,1.5L14.3,1.5Q15.2,1.5 15.2,2.3L15.2,4L1,4Z" fill="#3a7fd6"/><path d="M.4,2.9Q.4,2.3 1,2.3L15,2.3Q15.6,2.3 15.6,2.9L15.2,10.7Q15.2,11.3 14.6,11.3L1.4,11.3Q.8,11.3 .8,10.7Z" fill="url(#fg18)"/><path d="M.82,10.1L15.18,10.1L15.2,10.7Q15.2,11.3 14.6,11.3L1.4,11.3Q.8,11.3 .8,10.7Z" fill="#3f84d8"/><path d="M.5,2.5H15.5" stroke="#b4d6f8" stroke-width=".5" opacity=".7"/></svg>
<div class="t " style="left:99.3px;top:375.00px;">opt</div>
<svg style="left:81.8px;top:385.5px" width="3.9" height="5.4" viewBox="0 0 3.4 4.8"><path d="M.7,.5L2.7,2.4L.7,4.3" fill="none" stroke="#1c1c1c" stroke-width="1.15"/></svg>
<svg style="left:88.8px;top:384.9px" width="8.2" height="6.6" viewBox="0 0 16 12"><defs><linearGradient id="fg19" x1="0" y1="0" x2="0" y2="1"><stop offset="0" stop-color="#62a6ec"/><stop offset="1" stop-color="#d2e8fc"/></linearGradient></defs><path d="M1,1.3Q1,.4 1.9,.4L5.6,.4L6.6,1.5L14.3,1.5Q15.2,1.5 15.2,2.3L15.2,4L1,4Z" fill="#3a7fd6"/><path d="M.4,2.9Q.4,2.3 1,2.3L15,2.3Q15.6,2.3 15.6,2.9L15.2,10.7Q15.2,11.3 14.6,11.3L1.4,11.3Q.8,11.3 .8,10.7Z" fill="url(#fg19)"/><path d="M.82,10.1L15.18,10.1L15.2,10.7Q15.2,11.3 14.6,11.3L1.4,11.3Q.8,11.3 .8,10.7Z" fill="#3f84d8"/><path d="M.5,2.5H15.5" stroke="#b4d6f8" stroke-width=".5" opacity=".7"/></svg>
<div class="t " style="left:99.3px;top:384.70px;">proc</div>
<svg style="left:81.8px;top:395.3px" width="3.9" height="5.4" viewBox="0 0 3.4 4.8"><path d="M.7,.5L2.7,2.4L.7,4.3" fill="none" stroke="#1c1c1c" stroke-width="1.15"/></svg>
<svg style="left:88.8px;top:394.7px" width="8.2" height="6.6" viewBox="0 0 16 12"><defs><linearGradient id="fg20" x1="0" y1="0" x2="0" y2="1"><stop offset="0" stop-color="#62a6ec"/><stop offset="1" stop-color="#d2e8fc"/></linearGradient></defs><path d="M1,1.3Q1,.4 1.9,.4L5.6,.4L6.6,1.5L14.3,1.5Q15.2,1.5 15.2,2.3L15.2,4L1,4Z" fill="#3a7fd6"/><path d="M.4,2.9Q.4,2.3 1,2.3L15,2.3Q15.6,2.3 15.6,2.9L15.2,10.7Q15.2,11.3 14.6,11.3L1.4,11.3Q.8,11.3 .8,10.7Z" fill="url(#fg20)"/><path d="M.82,10.1L15.18,10.1L15.2,10.7Q15.2,11.3 14.6,11.3L1.4,11.3Q.8,11.3 .8,10.7Z" fill="#3f84d8"/><path d="M.5,2.5H15.5" stroke="#b4d6f8" stroke-width=".5" opacity=".7"/></svg>
<div class="t " style="left:99.3px;top:394.50px;">root</div>
<svg style="left:81.8px;top:405.0px" width="3.9" height="5.4" viewBox="0 0 3.4 4.8"><path d="M.7,.5L2.7,2.4L.7,4.3" fill="none" stroke="#1c1c1c" stroke-width="1.15"/></svg>
<svg style="left:88.8px;top:404.4px" width="8.2" height="6.6" viewBox="0 0 16 12"><defs><linearGradient id="fg21" x1="0" y1="0" x2="0" y2="1"><stop offset="0" stop-color="#62a6ec"/><stop offset="1" stop-color="#d2e8fc"/></linearGradient></defs><path d="M1,1.3Q1,.4 1.9,.4L5.6,.4L6.6,1.5L14.3,1.5Q15.2,1.5 15.2,2.3L15.2,4L1,4Z" fill="#3a7fd6"/><path d="M.4,2.9Q.4,2.3 1,2.3L15,2.3Q15.6,2.3 15.6,2.9L15.2,10.7Q15.2,11.3 14.6,11.3L1.4,11.3Q.8,11.3 .8,10.7Z" fill="url(#fg21)"/><path d="M.82,10.1L15.18,10.1L15.2,10.7Q15.2,11.3 14.6,11.3L1.4,11.3Q.8,11.3 .8,10.7Z" fill="#3f84d8"/><path d="M.5,2.5H15.5" stroke="#b4d6f8" stroke-width=".5" opacity=".7"/></svg>
<div class="t " style="left:99.3px;top:404.20px;">sbin</div>
<svg style="left:81.8px;top:414.6px" width="3.9" height="5.4" viewBox="0 0 3.4 4.8"><path d="M.7,.5L2.7,2.4L.7,4.3" fill="none" stroke="#1c1c1c" stroke-width="1.15"/></svg>
<svg style="left:88.8px;top:414.0px" width="8.2" height="6.6" viewBox="0 0 16 12"><defs><linearGradient id="fg22" x1="0" y1="0" x2="0" y2="1"><stop offset="0" stop-color="#62a6ec"/><stop offset="1" stop-color="#d2e8fc"/></linearGradient></defs><path d="M1,1.3Q1,.4 1.9,.4L5.6,.4L6.6,1.5L14.3,1.5Q15.2,1.5 15.2,2.3L15.2,4L1,4Z" fill="#3a7fd6"/><path d="M.4,2.9Q.4,2.3 1,2.3L15,2.3Q15.6,2.3 15.6,2.9L15.2,10.7Q15.2,11.3 14.6,11.3L1.4,11.3Q.8,11.3 .8,10.7Z" fill="url(#fg22)"/><path d="M.82,10.1L15.18,10.1L15.2,10.7Q15.2,11.3 14.6,11.3L1.4,11.3Q.8,11.3 .8,10.7Z" fill="#3f84d8"/><path d="M.5,2.5H15.5" stroke="#b4d6f8" stroke-width=".5" opacity=".7"/></svg>
<div class="t " style="left:99.3px;top:413.80px;">selinux</div>
<div style="left:174.8px;top:264.5px;width:7.1px;height:140.10000000000002px;background:linear-gradient(90deg,#a2a2a2,#b6b6b5 40%,#adadac);border-radius:1.5px;box-shadow:0 0 0 .5px #9a9a9a inset"></div>
<div style="left:175.10000000000002px;top:330px;width:6.5px;height:55.5px;background:linear-gradient(90deg,#c4c4c4,#e8e8e8 40%,#d2d2d2 80%,#b2b2b2);border-radius:1.5px;box-shadow:0 0 0 .5px #949494 inset"></div>
<svg style="left:175.35000000000002px;top:258px" width="6" height="4" viewBox="-3 -2 6 4"><path d="M-2.2,1.1L0,-1.1L2.2,1.1" fill="none" stroke="#1c1c1c" stroke-width="1.15"/></svg>
<svg style="left:175.35000000000002px;top:407.4px" width="6" height="4" viewBox="-3 -2 6 4"><path d="M-2.2,1.1L0,-1.1L2.2,1.1" fill="none" stroke="#1c1c1c" stroke-width="1.15"/></svg>
<svg style="left:175.35000000000002px;top:413.2px" width="6" height="4" viewBox="-3 -2 6 4"><path d="M-2.2,-1.1L0,1.1L2.2,-1.1" fill="none" stroke="#1c1c1c" stroke-width="1.15"/></svg>
<svg style="left:186px;top:37.9px" width="11" height="9.2" viewBox="0 0 16 13.4"><defs><linearGradient id="fg23" x1="0" y1="0" x2="0" y2="1"><stop offset="0" stop-color="#4a94e6"/><stop offset="1" stop-color="#9ccdf8"/></linearGradient></defs><path d="M1,1.3Q1,.4 1.9,.4L5.6,.4L6.6,1.5L14.3,1.5Q15.2,1.5 15.2,2.3L15.2,4L1,4Z" fill="#3a7fd6"/><path d="M.4,2.9Q.4,2.3 1,2.3L15,2.3Q15.6,2.3 15.6,2.9L15.2,10.7Q15.2,11.3 14.6,11.3L1.4,11.3Q.8,11.3 .8,10.7Z" fill="url(#fg23)"/><path d="M.82,10.1L15.18,10.1L15.2,10.7Q15.2,11.3 14.6,11.3L1.4,11.3Q.8,11.3 .8,10.7Z" fill="#3f84d8"/><path d="M.5,2.5H15.5" stroke="#b4d6f8" stroke-width=".5" opacity=".7"/><rect x="4" y="4.4" width="9" height="7.4" fill="#f4f4f4" stroke="#9aa8bc" stroke-width=".3"/><rect x="4.8" y="5.2" width="7.4" height="5.4" fill="#2248b4"/><circle cx="7.6" cy="7.2" r="1.7" fill="#e0306a"/><circle cx="9.6" cy="6.8" r="1.5" fill="#c040c8"/><path d="M8.4,8.4L8.2,10.4" stroke="#301818" stroke-width=".7"/></svg>
<svg style="left:198.2px;top:40.0px" width="3.4" height="5.2" viewBox="0 0 3.4 5.2"><path d="M.6,.6L2.7,2.6L.6,4.6" fill="none" stroke="#2a2a2a" stroke-width="1.05"/></svg>
<div class="t " style="left:203.8px;top:39.00px;color:#3c3c3c;font-size:6.1px">Pictures</div>
<svg style="left:232px;top:40.0px" width="3.4" height="5.2" viewBox="0 0 3.4 5.2"><path d="M.6,.6L2.7,2.6L.6,4.6" fill="none" stroke="#2a2a2a" stroke-width="1.05"/></svg>
<div class="t " style="left:239.5px;top:39.00px;font-weight:bold">Twilight</div>
<div style="left:186px;top:49px;width:360px;height:360px;background:#fff;border:1px solid #a9a9a9;border-top-color:#b4b4b4;border-radius:2px;box-shadow:0 0 0 .6px #e6e6e6"></div>
<div style="left:189.3px;top:53.2px;width:354.2px;height:11px;border:.6px solid #b4b4b4;border-bottom:none;border-radius:2px 2px 0 0;-webkit-mask-image:linear-gradient(#000 30%,transparent)"></div>
<svg style="left:193.5px;top:56px" width="6.6" height="6" viewBox="0 0 9 8"><rect width="9" height="8" fill="#2b50b8"/><circle cx="3" cy="3.6" r="2.2" fill="#d8344a"/><circle cx="6" cy="3.4" r="2" fill="#8a3bb0"/><rect x="0" y="7" width="9" height="1" fill="#e6e6e6"/></svg>
<div class="t " style="left:203.6px;top:55.60px;color:#4a4a4a;font-weight:bold;font-size:5.8px">JPEG image</div>
<svg width="0" height="0" style="left:0;top:0"><defs><filter id="nz3" x="0" y="0" width="100%" height="100%" color-interpolation-filters="sRGB"><feTurbulence type="fractalNoise" baseFrequency=".07 .12" numOctaves="4" seed="5"/><feColorMatrix values="2.8 0 0 0 -.9  2.8 0 0 0 -.9  2.8 0 0 0 -.9  0 0 0 0 1"/></filter><filter id="nz" x="0" y="0" width="100%" height="100%" color-interpolation-filters="sRGB"><feTurbulence type="fractalNoise" baseFrequency=".035 .11" numOctaves="4" seed="7"/><feColorMatrix values="2.6 0 0 0 -.8  2.6 0 0 0 -.8  2.6 0 0 0 -.8  0 0 0 0 1"/></filter><filter id="nz2" x="0" y="0" width="100%" height="100%" color-interpolation-filters="sRGB"><feTurbulence type="fractalNoise" baseFrequency=".05 .07" numOctaves="4" seed="11"/><feColorMatrix values="2.6 0 0 0 -.8  2.6 0 0 0 -.8  2.6 0 0 0 -.8  0 0 0 0 1"/></filter><filter id="b2" x="-30%" y="-30%" width="160%" height="160%"><feGaussianBlur stdDeviation="2"/></filter><filter id="b4" x="-30%" y="-30%" width="160%" height="160%"><feGaussianBlur stdDeviation="4"/></filter><filter id="b1" x="-30%" y="-30%" width="160%" height="160%"><feGaussianBlur stdDeviation="1"/></filter></defs></svg>
<div class="thumb" style="left:201.5px;top:80px;width:93.5px;height:35.8px;overflow:hidden;background:#000"><svg style="left:0;top:0" width="93.5" height="35.8" viewBox="0 0 100 100" preserveAspectRatio="none"><defs><linearGradient id="s1" x1="0" y1="0" x2="0" y2="1"><stop offset="0" stop-color="#1e0c34"/><stop offset="0.3" stop-color="#291242"/><stop offset="0.45" stop-color="#462056"/><stop offset="0.58" stop-color="#8e4470"/><stop offset="0.7" stop-color="#c0607a"/><stop offset="0.82" stop-color="#cc5648"/><stop offset="0.92" stop-color="#9a2e30"/><stop offset="1" stop-color="#3a1020"/></linearGradient><radialGradient id="v1" cx="0.5" cy="0.5" r="0.78"><stop offset="0" stop-color="#000" stop-opacity="0"/><stop offset="0.6" stop-color="#000" stop-opacity="0"/><stop offset="1" stop-color="#000" stop-opacity="0.5"/></radialGradient></defs><rect width="100" height="100" fill="url(#s1)"/><ellipse cx="50" cy="22" rx="52" ry="12" fill="#2a1244" opacity="0.75" filter="url(#b4)"/><ellipse cx="72" cy="44" rx="30" ry="7" fill="#3c1a56" opacity="0.8" filter="url(#b2)"/><ellipse cx="25" cy="8" rx="9" ry="2.4" fill="#5a4c88" opacity="0.6" filter="url(#b2)"/><ellipse cx="75" cy="12" rx="11" ry="3" fill="#4c4084" opacity="0.5" filter="url(#b2)"/><ellipse cx="14" cy="52" rx="13" ry="6" fill="#ffe6c8" opacity="1" filter="url(#b2)"/><ellipse cx="10" cy="60" rx="10" ry="5" fill="#fff0d0" opacity="0.9" filter="url(#b2)"/><ellipse cx="30" cy="60" rx="16" ry="4" fill="#f49a78" opacity="0.9" filter="url(#b2)"/><ellipse cx="20" cy="72" rx="14" ry="4" fill="#ffc890" opacity="0.9" filter="url(#b2)"/><ellipse cx="55" cy="66" rx="28" ry="3.5" fill="#e07a6a" opacity="0.8" filter="url(#b2)"/><ellipse cx="86" cy="60" rx="14" ry="3" fill="#c8607a" opacity="0.7" filter="url(#b2)"/><ellipse cx="40" cy="47" rx="20" ry="3" fill="#8a4a7a" opacity="0.6" filter="url(#b2)"/><ellipse cx="62" cy="78" rx="30" ry="3" fill="#5a2448" opacity="0.7" filter="url(#b2)"/><rect x="0" y="0" width="100" height="90" filter="url(#nz)" opacity="0.35" style="mix-blend-mode:overlay"/><rect width="100" height="100" fill="url(#v1)"/><path d="M0,66 6,69 14,74 24,80 36,84 48,89 58,93 60.5,93 61.5,86 62.5,93 80,93 82,88 83.5,80 85,86 87,88 89,93 100,93 100,100 0,100Z" fill="#12081a" /></svg></div>
<div class="thumb" style="left:320px;top:68px;width:89px;height:60px;overflow:hidden;background:#000"><svg style="left:0;top:0" width="89" height="60" viewBox="0 0 100 100" preserveAspectRatio="none"><defs><linearGradient id="s2" x1="0" y1="0" x2="0" y2="1"><stop offset="0" stop-color="#06144c"/><stop offset="0.2" stop-color="#10348e"/><stop offset="0.45" stop-color="#2a5ec2"/><stop offset="0.62" stop-color="#5a8ad8"/><stop offset="0.73" stop-color="#a8b4d0"/><stop offset="0.78" stop-color="#e8a868"/><stop offset="0.8" stop-color="#402820"/><stop offset="1" stop-color="#000"/></linearGradient><radialGradient id="r2" cx="0.5" cy="0.79" r="0.26"><stop offset="0" stop-color="#fffbe8" stop-opacity="1"/><stop offset="0.15" stop-color="#ffe2a0" stop-opacity="0.95"/><stop offset="0.45" stop-color="#f2b070" stop-opacity="0.4"/><stop offset="1" stop-color="#f0a860" stop-opacity="0"/></radialGradient><radialGradient id="v2" cx="0.5" cy="0.5" r="0.78"><stop offset="0" stop-color="#000" stop-opacity="0"/><stop offset="0.5" stop-color="#000" stop-opacity="0"/><stop offset="1" stop-color="#000" stop-opacity="0.8"/></radialGradient></defs><rect width="100" height="100" fill="url(#s2)"/><path d="M50,80L182.8,35.8L180.2,28.5Z" fill="#cfe0ff" opacity=".085" filter="url(#b1)"/><path d="M50,80L162.7,-3.1L157.9,-9.2Z" fill="#cfe0ff" opacity=".085" filter="url(#b1)"/><path d="M50,80L133.5,-32.4L127.1,-36.9Z" fill="#cfe0ff" opacity=".085" filter="url(#b1)"/><path d="M50,80L106.0,-48.3L98.8,-51.2Z" fill="#cfe0ff" opacity=".085" filter="url(#b1)"/><path d="M50,80L78.2,-57.1L70.5,-58.5Z" fill="#cfe0ff" opacity=".085" filter="url(#b1)"/><path d="M50,80L49.0,-60.0L41.2,-59.7Z" fill="#cfe0ff" opacity=".085" filter="url(#b1)"/><path d="M50,80L19.9,-56.7L12.4,-54.8Z" fill="#cfe0ff" opacity=".085" filter="url(#b1)"/><path d="M50,80L-12.2,-45.4L-19.2,-41.7Z" fill="#cfe0ff" opacity=".085" filter="url(#b1)"/><path d="M50,80L-40.7,-26.6L-46.5,-21.4Z" fill="#cfe0ff" opacity=".085" filter="url(#b1)"/><path d="M50,80L-66.6,2.5L-70.8,9.2Z" fill="#cfe0ff" opacity=".085" filter="url(#b1)"/><path d="M50,80L-81.9,33.0L-84.3,40.5Z" fill="#cfe0ff" opacity=".085" filter="url(#b1)"/><rect width="100" height="100" fill="url(#r2)"/><ellipse cx="48" cy="45" rx="5" ry="2" fill="#fff" opacity="0.95" filter="url(#b1)"/><ellipse cx="44" cy="48" rx="3.4" ry="2" fill="#f0ecf0" opacity="0.9" filter="url(#b1)"/><ellipse cx="40" cy="52" rx="3" ry="1.8" fill="#c8c0c8" opacity="0.85" filter="url(#b1)"/><ellipse cx="36" cy="55" rx="2" ry="1.6" fill="#6a6478" opacity="0.8" filter="url(#b1)"/><ellipse cx="30" cy="47" rx="3" ry="1.8" fill="#f4f0f0" opacity="0.85" filter="url(#b1)"/><ellipse cx="26" cy="49" rx="2" ry="1.6" fill="#d8d0d0" opacity="0.8" filter="url(#b1)"/><ellipse cx="21" cy="48" rx="1.6" ry="1.4" fill="#d0c8d0" opacity="0.7" filter="url(#b1)"/><ellipse cx="14" cy="51" rx="2" ry="2.6" fill="#c8c0c8" opacity="0.8" filter="url(#b1)"/><ellipse cx="19" cy="54" rx="1.6" ry="1.8" fill="#c0b8c0" opacity="0.7" filter="url(#b1)"/><ellipse cx="3" cy="56" rx="3.2" ry="3.6" fill="#7a7686" opacity="0.85" filter="url(#b1)"/><ellipse cx="7" cy="16" rx="1.4" ry="1.2" fill="#a8b4dc" opacity="0.6" filter="url(#b1)"/><ellipse cx="10" cy="22" rx="1.2" ry="1" fill="#a8b4dc" opacity="0.5" filter="url(#b1)"/><ellipse cx="5" cy="32" rx="1.4" ry="1.2" fill="#a0acd4" opacity="0.5" filter="url(#b1)"/><ellipse cx="69" cy="40" rx="4.4" ry="4" fill="#e4e4ec" opacity="0.95" filter="url(#b1)"/><ellipse cx="74" cy="45" rx="4" ry="3.4" fill="#c0c0d0" opacity="0.9" filter="url(#b1)"/><ellipse cx="64" cy="50" rx="3.6" ry="2.4" fill="#f4ece4" opacity="0.9" filter="url(#b1)"/><ellipse cx="66" cy="46" rx="2.4" ry="2" fill="#fff" opacity="0.8" filter="url(#b1)"/><ellipse cx="82" cy="53" rx="12" ry="4" fill="#2a3248" opacity="0.9" filter="url(#b1)"/><ellipse cx="72" cy="60" rx="9" ry="2" fill="#383648" opacity="0.85" filter="url(#b1)"/><ellipse cx="93" cy="48" rx="6" ry="3" fill="#4a526c" opacity="0.8" filter="url(#b1)"/><ellipse cx="62" cy="64" rx="5" ry="1.4" fill="#4a4858" opacity="0.7" filter="url(#b1)"/><ellipse cx="93" cy="27" rx="3.2" ry="2.4" fill="#d0d4e8" opacity="0.85" filter="url(#b1)"/><ellipse cx="96" cy="22" rx="1.8" ry="1.8" fill="#c0c8e0" opacity="0.7" filter="url(#b1)"/><rect width="100" height="100" fill="url(#v2)"/><path d="M0,80 18,79.5 30,78.5 34,76.5 40,75 52,74.6 54,76.5 58,76 62,77.5 66,76.5 70,78 80,77.4 83,75.5 85,77.4 100,77 100,100 0,100Z" fill="#030306" /></svg></div>
<div class="thumb" style="left:433px;top:74px;width:94px;height:48px;overflow:hidden;background:#000"><svg style="left:0;top:0" width="94" height="48" viewBox="0 0 100 100" preserveAspectRatio="none"><defs><linearGradient id="s3" x1="0" y1="0" x2="0" y2="1"><stop offset="0" stop-color="#243e3c"/><stop offset="0.25" stop-color="#3f5c56"/><stop offset="0.42" stop-color="#667a56"/><stop offset="0.54" stop-color="#a8984c"/><stop offset="0.63" stop-color="#dcb04c"/><stop offset="0.72" stop-color="#a4883a"/><stop offset="0.84" stop-color="#a8742e"/><stop offset="1" stop-color="#3a2410"/></linearGradient><radialGradient id="v3" cx="0.5" cy="0.5" r="0.78"><stop offset="0" stop-color="#000" stop-opacity="0"/><stop offset="0.6" stop-color="#000" stop-opacity="0"/><stop offset="1" stop-color="#000" stop-opacity="0.55"/></radialGradient></defs><rect width="100" height="100" fill="url(#s3)"/><ellipse cx="10" cy="25" rx="22" ry="16" fill="#1f3a3c" opacity="0.6" filter="url(#b4)"/><ellipse cx="70" cy="20" rx="34" ry="12" fill="#56746c" opacity="0.5" filter="url(#b4)"/><path d="M2,49 12,52 26,60 38,68 36,72 22,66 2,58Z" fill="#f4b54e" opacity=".85" filter="url(#b2)"/><path d="M27,44 31,43 41,64 37,66Z" fill="#e8b860" opacity=".7" filter="url(#b1)"/><ellipse cx="72" cy="63" rx="28" ry="2.2" fill="#fff2b0" opacity="1" filter="url(#b1)"/><ellipse cx="88" cy="60" rx="12" ry="3" fill="#fffbe0" opacity="1" filter="url(#b1)"/><ellipse cx="50" cy="64.5" rx="14" ry="1.6" fill="#ffd870" opacity="0.9" filter="url(#b1)"/><ellipse cx="40" cy="66" rx="5" ry="2.4" fill="#ffe8a0" opacity="1" filter="url(#b1)"/><ellipse cx="20" cy="74" rx="22" ry="3" fill="#c89844" opacity="0.55" filter="url(#b2)"/><ellipse cx="60" cy="74" rx="34" ry="3" fill="#8a7a3c" opacity="0.5" filter="url(#b2)"/><ellipse cx="50" cy="90" rx="18" ry="4" fill="#f6a040" opacity="0.95" filter="url(#b2)"/><ellipse cx="75" cy="88" rx="10" ry="3" fill="#d88a38" opacity="0.7" filter="url(#b2)"/><rect x="0" y="0" width="100" height="80" filter="url(#nz2)" opacity="0.15" style="mix-blend-mode:overlay"/><rect width="100" height="100" fill="url(#v3)"/><path d="M0,82 6,84 16,88 26,93 40,96 43,96 44,90 45,96 52,96 54,91 56,87 58,92 60,96 72,96 76,93 84,91 88,86 90,76 93,66 95,62 96,70 98,66 100,72 100,100 0,100Z" fill="#0a0806" /></svg></div>
<div class="thumb" style="left:209px;top:169px;width:79px;height:60px;overflow:hidden;background:#000"><svg style="left:0;top:0" width="79" height="60" viewBox="0 0 100 100" preserveAspectRatio="none"><defs><linearGradient id="s4" x1="0" y1="0" x2="0" y2="1"><stop offset="0" stop-color="#222c3c"/><stop offset="0.15" stop-color="#3c4a60"/><stop offset="0.3" stop-color="#4e5260"/><stop offset="0.37" stop-color="#685850"/><stop offset="0.42" stop-color="#b8845a"/><stop offset="0.47" stop-color="#b06a34"/><stop offset="0.53" stop-color="#33271f"/><stop offset="0.62" stop-color="#463a30"/><stop offset="0.8" stop-color="#241e18"/><stop offset="1" stop-color="#080605"/></linearGradient><radialGradient id="v4" cx="0.5" cy="0.5" r="0.78"><stop offset="0" stop-color="#000" stop-opacity="0"/><stop offset="0.55" stop-color="#000" stop-opacity="0"/><stop offset="1" stop-color="#000" stop-opacity="0.7"/></radialGradient></defs><rect width="100" height="100" fill="url(#s4)"/><ellipse cx="8" cy="17" rx="9" ry="5" fill="#a6bedb" opacity="0.9" filter="url(#b2)"/><ellipse cx="4" cy="40" rx="7" ry="3" fill="#e8c8a8" opacity="0.9" filter="url(#b2)"/><ellipse cx="14" cy="44" rx="8" ry="2" fill="#f0a860" opacity="0.8" filter="url(#b2)"/><ellipse cx="30" cy="10" rx="14" ry="4" fill="#97a9c4" opacity="0.8" filter="url(#b2)"/><ellipse cx="52" cy="16" rx="16" ry="4" fill="#8c9eba" opacity="0.75" filter="url(#b2)"/><ellipse cx="78" cy="10" rx="14" ry="4" fill="#8092b0" opacity="0.75" filter="url(#b2)"/><ellipse cx="88" cy="22" rx="10" ry="3" fill="#94a6c2" opacity="0.65" filter="url(#b2)"/><ellipse cx="40" cy="26" rx="22" ry="4" fill="#5f6c82" opacity="0.6" filter="url(#b2)"/><ellipse cx="60" cy="32" rx="36" ry="5" fill="#2a2e3a" opacity="0.8" filter="url(#b2)"/><ellipse cx="20" cy="30" rx="18" ry="4" fill="#3a3c48" opacity="0.7" filter="url(#b2)"/><ellipse cx="50" cy="44" rx="18" ry="2.6" fill="#ffd070" opacity="1" filter="url(#b2)"/><ellipse cx="50" cy="45" rx="9" ry="2" fill="#fff4c0" opacity="1" filter="url(#b1)"/><ellipse cx="84" cy="45" rx="12" ry="2" fill="#b86a30" opacity="0.8" filter="url(#b2)"/><ellipse cx="14" cy="43" rx="14" ry="2.6" fill="#e8cdb4" opacity="0.85" filter="url(#b2)"/><rect x="0" y="0" width="100" height="48" filter="url(#nz3)" opacity="0.6" style="mix-blend-mode:overlay"/><path d="M0,53 10,52.5 18,51 26,50 32,47.5 36,44.5 40,46 44,48.5 50,48 56,49.5 62,48 68,50 76,49.5 84,48 92,45 97,41 100,40 100,57 0,57Z" fill="#0a0909" /><ellipse cx="48" cy="66" rx="7" ry="10" fill="#c8741c" opacity="0.8" filter="url(#b2)"/><ellipse cx="49" cy="59" rx="5" ry="3" fill="#f6a23a" opacity="0.8" filter="url(#b2)"/><ellipse cx="40" cy="62" rx="3" ry="6" fill="#a86420" opacity="0.6" filter="url(#b2)"/><ellipse cx="57" cy="62" rx="3" ry="6" fill="#a86420" opacity="0.6" filter="url(#b2)"/><ellipse cx="48" cy="82" rx="7" ry="8" fill="#6a4218" opacity="0.5" filter="url(#b2)"/><ellipse cx="14" cy="62" rx="12" ry="4" fill="#5a5a5e" opacity="0.5" filter="url(#b2)"/><ellipse cx="80" cy="62" rx="14" ry="4" fill="#4a4038" opacity="0.5" filter="url(#b2)"/><rect width="100" height="100" fill="url(#v4)"/></svg></div>
<div class="thumb" style="left:317px;top:181px;width:94px;height:36px;overflow:hidden;background:#000"><svg style="left:0;top:0" width="94" height="36" viewBox="0 0 100 100" preserveAspectRatio="none"><defs><linearGradient id="s5" x1="0" y1="0" x2="0" y2="1"><stop offset="0" stop-color="#121212"/><stop offset="0.3" stop-color="#181818"/><stop offset="0.45" stop-color="#2e2e2e"/><stop offset="0.58" stop-color="#565656"/><stop offset="0.7" stop-color="#6e6e6e"/><stop offset="0.82" stop-color="#848484"/><stop offset="0.92" stop-color="#4e4e4e"/><stop offset="1" stop-color="#1c1c1c"/></linearGradient><radialGradient id="v5" cx="0.5" cy="0.5" r="0.78"><stop offset="0" stop-color="#000" stop-opacity="0"/><stop offset="0.6" stop-color="#000" stop-opacity="0"/><stop offset="1" stop-color="#000" stop-opacity="0.55"/></radialGradient></defs><rect width="100" height="100" fill="url(#s5)"/><ellipse cx="50" cy="22" rx="52" ry="12" fill="#101010" opacity="0.8" filter="url(#b4)"/><ellipse cx="72" cy="44" rx="30" ry="7" fill="#1e1e1e" opacity="0.85" filter="url(#b2)"/><ellipse cx="25" cy="8" rx="9" ry="2.4" fill="#5e5e5e" opacity="0.6" filter="url(#b2)"/><ellipse cx="75" cy="12" rx="11" ry="3" fill="#505050" opacity="0.5" filter="url(#b2)"/><ellipse cx="13" cy="52" rx="11" ry="5" fill="#f4f4f4" opacity="0.95" filter="url(#b2)"/><ellipse cx="9" cy="60" rx="9" ry="4" fill="#ececec" opacity="0.85" filter="url(#b2)"/><ellipse cx="30" cy="60" rx="14" ry="3" fill="#9a9a9a" opacity="0.85" filter="url(#b2)"/><ellipse cx="20" cy="72" rx="12" ry="3" fill="#d4d4d4" opacity="0.85" filter="url(#b2)"/><ellipse cx="55" cy="66" rx="28" ry="3" fill="#848484" opacity="0.75" filter="url(#b2)"/><ellipse cx="86" cy="60" rx="14" ry="3" fill="#707070" opacity="0.7" filter="url(#b2)"/><ellipse cx="40" cy="47" rx="20" ry="3" fill="#4a4a4a" opacity="0.6" filter="url(#b2)"/><ellipse cx="62" cy="76" rx="30" ry="3" fill="#383838" opacity="0.6" filter="url(#b2)"/><ellipse cx="80" cy="84" rx="20" ry="4" fill="#9a9a9a" opacity="0.7" filter="url(#b2)"/><rect x="0" y="0" width="100" height="90" filter="url(#nz)" opacity="0.3" style="mix-blend-mode:overlay"/><rect width="100" height="100" fill="url(#v5)"/><path d="M0,66 6,69 14,74 24,80 36,84 48,89 58,93 60.5,93 61.5,86 62.5,93 80,93 82,88 83.5,80 85,86 87,88 89,93 100,93 100,100 0,100Z" fill="#0a0a0a" /></svg></div>
<div class="thumb" style="left:440.7px;top:169px;width:79.3px;height:60px;overflow:hidden;background:#000"><svg style="left:0;top:0" width="79.3" height="60" viewBox="0 0 100 100" preserveAspectRatio="none"><defs><linearGradient id="s6" x1="0" y1="0" x2="0" y2="1"><stop offset="0" stop-color="#f9dcb0"/><stop offset="0.14" stop-color="#f9c780"/><stop offset="0.28" stop-color="#f7aa4c"/><stop offset="0.4" stop-color="#ef8a34"/><stop offset="0.5" stop-color="#dc6232"/><stop offset="0.545" stop-color="#7c505c"/><stop offset="0.62" stop-color="#4e4c64"/><stop offset="0.8" stop-color="#30303f"/><stop offset="1" stop-color="#0c0c12"/></linearGradient></defs><rect width="100" height="100" fill="url(#s6)"/><path d="M8,55 16,52 20,50 24,51.5 34,52.5 42,55 46,57 50,58 70,58 70,75 8,75Z" fill="#3b3a50" /><path d="M24,86 36,70 44,61 48,58.5 52,61 60,70 68,82 70,86Z" fill="#34364e" /><ellipse cx="47" cy="80" rx="20" ry="5" fill="#44445c" opacity="0.5" filter="url(#b2)"/><path d="M2,4 3.3,17.7 2.6,18.7 4.6,31.4 3.2,32.4 5.9,45.1 3.7,46.1 7.1,58.9 4.3,59.9 8.4,72.6 4.9,73.6 9.7,86.3 5.5,87.3 11.0,100.0 6.0,101.0 6.5,100 -2.5,100 -2.0,101.0 -7.0,100.0 -1.5,87.3 -5.7,86.3 -0.9,73.6 -4.4,72.6 -0.3,59.9 -3.1,58.9 0.3,46.1 -1.9,45.1 0.8,32.4 -0.6,31.4 1.4,18.7 0.7,17.7Z" fill="#07060a"/><path d="M10,36 11.6,45.1 10.7,46.1 13.1,54.3 11.4,55.3 14.7,63.4 12.1,64.4 16.3,72.6 12.8,73.6 17.9,81.7 13.5,82.7 19.4,90.9 14.2,91.9 21.0,100.0 14.9,101.0 15.5,100 4.5,100 5.0,101.0 -1.0,100.0 5.8,91.9 0.6,90.9 6.5,82.7 2.1,81.7 7.2,73.6 3.7,72.6 7.9,64.4 5.3,63.4 8.6,55.3 6.9,54.3 9.3,46.1 8.4,45.1Z" fill="#07060a"/><path d="M17,56 18.3,62.3 17.6,63.3 19.6,68.6 18.2,69.6 20.9,74.9 18.7,75.9 22.1,81.1 19.3,82.1 23.4,87.4 19.9,88.4 24.7,93.7 20.5,94.7 26.0,100.0 21.1,101.0 21.5,100 12.5,100 12.9,101.0 8.0,100.0 13.5,94.7 9.3,93.7 14.1,88.4 10.6,87.4 14.7,82.1 11.9,81.1 15.3,75.9 13.1,74.9 15.8,69.6 14.4,68.6 16.4,63.3 15.7,62.3Z" fill="#07060a"/><path d="M24,74 25.0,77.7 24.4,78.7 26.0,81.4 24.9,82.4 27.0,85.1 25.4,86.1 28.0,88.9 25.8,89.9 29.0,92.6 26.2,93.6 30.0,96.3 26.7,97.3 31.0,100.0 27.1,101.0 27.5,100 20.5,100 20.9,101.0 17.0,100.0 21.3,97.3 18.0,96.3 21.8,93.6 19.0,92.6 22.2,89.9 20.0,88.9 22.6,86.1 21.0,85.1 23.1,82.4 22.0,81.4 23.6,78.7 23.0,77.7Z" fill="#07060a"/><path d="M31,80 31.9,82.9 31.4,83.9 32.7,85.7 31.8,86.7 33.6,88.6 32.2,89.6 34.4,91.4 32.5,92.4 35.3,94.3 32.9,95.3 36.1,97.1 33.3,98.1 37.0,100.0 33.7,101.0 34.0,100 28.0,100 28.3,101.0 25.0,100.0 28.7,98.1 25.9,97.1 29.1,95.3 26.7,94.3 29.5,92.4 27.6,91.4 29.8,89.6 28.4,88.6 30.2,86.7 29.3,85.7 30.6,83.9 30.1,82.9Z" fill="#07060a"/><path d="M38,74 38.9,77.7 38.4,78.7 39.7,81.4 38.8,82.4 40.6,85.1 39.2,86.1 41.4,88.9 39.5,89.9 42.3,92.6 39.9,93.6 43.1,96.3 40.3,97.3 44.0,100.0 40.7,101.0 41.0,100 35.0,100 35.3,101.0 32.0,100.0 35.7,97.3 32.9,96.3 36.1,93.6 33.7,92.6 36.5,89.9 34.6,88.9 36.8,86.1 35.4,85.1 37.2,82.4 36.3,81.4 37.6,78.7 37.1,77.7Z" fill="#07060a"/><path d="M46,80 46.9,82.9 46.4,83.9 47.7,85.7 46.8,86.7 48.6,88.6 47.2,89.6 49.4,91.4 47.5,92.4 50.3,94.3 47.9,95.3 51.1,97.1 48.3,98.1 52.0,100.0 48.7,101.0 49.0,100 43.0,100 43.3,101.0 40.0,100.0 43.7,98.1 40.9,97.1 44.1,95.3 41.7,94.3 44.5,92.4 42.6,91.4 44.8,89.6 43.4,88.6 45.2,86.7 44.3,85.7 45.6,83.9 45.1,82.9Z" fill="#07060a"/><path d="M53,66 54.0,70.9 53.5,71.9 55.0,75.7 53.9,76.7 56.0,80.6 54.4,81.6 57.0,85.4 54.8,86.4 58.0,90.3 55.2,91.3 59.0,95.1 55.7,96.1 60.0,100.0 56.1,101.0 56.5,100 49.5,100 49.9,101.0 46.0,100.0 50.3,96.1 47.0,95.1 50.8,91.3 48.0,90.3 51.2,86.4 49.0,85.4 51.6,81.6 50.0,80.6 52.1,76.7 51.0,75.7 52.5,71.9 52.0,70.9Z" fill="#07060a"/><path d="M60,72 60.9,76.0 60.4,77.0 61.7,80.0 60.8,81.0 62.6,84.0 61.2,85.0 63.4,88.0 61.5,89.0 64.3,92.0 61.9,93.0 65.1,96.0 62.3,97.0 66.0,100.0 62.7,101.0 63.0,100 57.0,100 57.3,101.0 54.0,100.0 57.7,97.0 54.9,96.0 58.1,93.0 55.7,92.0 58.5,89.0 56.6,88.0 58.8,85.0 57.4,84.0 59.2,81.0 58.3,80.0 59.6,77.0 59.1,76.0Z" fill="#07060a"/><path d="M73,21 75.4,32.3 74.1,33.3 77.9,43.6 75.2,44.6 80.3,54.9 76.3,55.9 82.7,66.1 77.4,67.1 85.1,77.4 78.5,78.4 87.6,88.7 79.6,89.7 90.0,100.0 80.7,101.0 81.5,100 64.5,100 65.3,101.0 56.0,100.0 66.4,89.7 58.4,88.7 67.5,78.4 60.9,77.4 68.6,67.1 63.3,66.1 69.7,55.9 65.7,54.9 70.8,44.6 68.1,43.6 71.9,33.3 70.6,32.3Z" fill="#07060a"/><path d="M90,7 92.9,20.3 91.3,21.3 95.7,33.6 92.6,34.6 98.6,46.9 93.9,47.9 101.4,60.1 95.1,61.1 104.3,73.4 96.4,74.4 107.1,86.7 97.7,87.7 110.0,100.0 99.0,101.0 100.0,100 80.0,100 81.0,101.0 70.0,100.0 82.3,87.7 72.9,86.7 83.6,74.4 75.7,73.4 84.9,61.1 78.6,60.1 86.1,47.9 81.4,46.9 87.4,34.6 84.3,33.6 88.7,21.3 87.1,20.3Z" fill="#07060a"/><path d="M82,34 83.7,43.4 82.8,44.4 85.4,52.9 83.5,53.9 87.1,62.3 84.3,63.3 88.9,71.7 85.1,72.7 90.6,81.1 85.9,82.1 92.3,90.6 86.6,91.6 94.0,100.0 87.4,101.0 88.0,100 76.0,100 76.6,101.0 70.0,100.0 77.4,91.6 71.7,90.6 78.1,82.1 73.4,81.1 78.9,72.7 75.1,71.7 79.7,63.3 76.9,62.3 80.5,53.9 78.6,52.9 81.2,44.4 80.3,43.4Z" fill="#07060a"/><path d="M100,24 101.4,34.9 100.6,35.9 102.9,45.7 101.3,46.7 104.3,56.6 101.9,57.6 105.7,67.4 102.6,68.4 107.1,78.3 103.2,79.3 108.6,89.1 103.9,90.1 110.0,100.0 104.5,101.0 105.0,100 95.0,100 95.5,101.0 90.0,100.0 96.1,90.1 91.4,89.1 96.8,79.3 92.9,78.3 97.4,68.4 94.3,67.4 98.1,57.6 95.7,56.6 98.7,46.7 97.1,45.7 99.4,35.9 98.6,34.9Z" fill="#07060a"/><path d="M65,48 66.4,55.4 65.6,56.4 67.9,62.9 66.3,63.9 69.3,70.3 66.9,71.3 70.7,77.7 67.6,78.7 72.1,85.1 68.2,86.1 73.6,92.6 68.9,93.6 75.0,100.0 69.5,101.0 70.0,100 60.0,100 60.5,101.0 55.0,100.0 61.1,93.6 56.4,92.6 61.8,86.1 57.9,85.1 62.4,78.7 59.3,77.7 63.1,71.3 60.7,70.3 63.7,63.9 62.1,62.9 64.4,56.4 63.6,55.4Z" fill="#07060a"/><path d="M0,82 20,80 40,84 60,82 66,72 100,66 100,100 0,100Z" fill="#060508" /></svg></div>
<div class="thumb" style="left:201.5px;top:274.8px;width:93.5px;height:50.8px;overflow:hidden;background:#000"><svg style="left:0;top:0" width="93.5" height="50.8" viewBox="0 0 100 100" preserveAspectRatio="none"><defs><linearGradient id="s7a" x1="0" y1="0" x2="0" y2="1"><stop offset="0" stop-color="#38435a"/><stop offset="0.12" stop-color="#4f5062"/><stop offset="0.26" stop-color="#6c4450"/><stop offset="0.4" stop-color="#a6382a"/><stop offset="0.55" stop-color="#d04222"/><stop offset="0.68" stop-color="#e24e22"/><stop offset="0.8" stop-color="#e86424"/><stop offset="1" stop-color="#a0381a"/></linearGradient><radialGradient id="v7a" cx="0.5" cy="0.5" r="0.78"><stop offset="0" stop-color="#000" stop-opacity="0"/><stop offset="0.6" stop-color="#000" stop-opacity="0"/><stop offset="1" stop-color="#000" stop-opacity="0.45"/></radialGradient></defs><rect width="100" height="100" fill="url(#s7a)"/><ellipse cx="20" cy="10" rx="20" ry="4" fill="#525c72" opacity="0.9" filter="url(#b2)"/><ellipse cx="50" cy="18" rx="26" ry="4" fill="#687284" opacity="0.8" filter="url(#b2)"/><ellipse cx="84" cy="32" rx="14" ry="4" fill="#78849a" opacity="0.85" filter="url(#b2)"/><ellipse cx="36" cy="32" rx="10" ry="2.4" fill="#a8b0bc" opacity="0.75" filter="url(#b2)"/><ellipse cx="8" cy="40" rx="8" ry="5" fill="#4a3a50" opacity="0.7" filter="url(#b2)"/><ellipse cx="60" cy="42" rx="20" ry="3.5" fill="#5a4056" opacity="0.7" filter="url(#b2)"/><ellipse cx="30" cy="50" rx="22" ry="3" fill="#6a4050" opacity="0.55" filter="url(#b2)"/><ellipse cx="68" cy="5" rx="14" ry="3" fill="#f0603c" opacity="0.95" filter="url(#b2)"/><ellipse cx="28" cy="18" rx="8" ry="2.4" fill="#f06a40" opacity="0.9" filter="url(#b2)"/><ellipse cx="12" cy="26" rx="10" ry="2.6" fill="#e8502e" opacity="0.9" filter="url(#b2)"/><ellipse cx="74" cy="40" rx="12" ry="2.4" fill="#f4643a" opacity="0.9" filter="url(#b2)"/><ellipse cx="44" cy="26" rx="12" ry="3" fill="#d84a30" opacity="0.8" filter="url(#b2)"/><ellipse cx="90" cy="16" rx="8" ry="2.4" fill="#d8503a" opacity="0.7" filter="url(#b2)"/><ellipse cx="50" cy="60" rx="50" ry="6" fill="#ef4f22" opacity="0.7" filter="url(#b2)"/><ellipse cx="88" cy="56" rx="12" ry="5" fill="#e84a28" opacity="0.7" filter="url(#b2)"/><ellipse cx="26" cy="82" rx="10" ry="3.4" fill="#ffd428" opacity="1" filter="url(#b2)"/><ellipse cx="24" cy="76" rx="18" ry="5" fill="#f88a20" opacity="0.7" filter="url(#b2)"/><ellipse cx="50" cy="70" rx="16" ry="4" fill="#f0682a" opacity="0.5" filter="url(#b2)"/><rect x="0" y="0" width="100" height="86" filter="url(#nz3)" opacity="0.6" style="mix-blend-mode:overlay"/><rect width="100" height="100" fill="url(#v7a)"/><path d="M0,76 4,78 10,82 15,83 20,84.5 28,84 36,80 46,76 56,72 60,69 64,70 68,66 74,63 78,64 82,62 88,62 94,59 100,60 100,100 0,100Z" fill="#040202" /></svg></div>
<div class="thumb" style="left:325px;top:270px;width:79.3px;height:60px;overflow:hidden;background:#000"><svg style="left:0;top:0" width="79.3" height="60" viewBox="0 0 100 100" preserveAspectRatio="none"><defs><linearGradient id="s8" x1="0" y1="0" x2="0" y2="1"><stop offset="0" stop-color="#a0aec6"/><stop offset="0.12" stop-color="#c2bab8"/><stop offset="0.24" stop-color="#e2aa88"/><stop offset="0.34" stop-color="#e8966c"/><stop offset="0.42" stop-color="#f4c068"/><stop offset="0.5" stop-color="#f8dc80"/><stop offset="0.55" stop-color="#d89a70"/><stop offset="0.59" stop-color="#3a2424"/><stop offset="0.68" stop-color="#0c0a0a"/><stop offset="1" stop-color="#030303"/></linearGradient><radialGradient id="v8" cx="0.5" cy="0.5" r="0.78"><stop offset="0" stop-color="#000" stop-opacity="0"/><stop offset="0.65" stop-color="#000" stop-opacity="0"/><stop offset="1" stop-color="#000" stop-opacity="0.4"/></radialGradient></defs><rect width="100" height="100" fill="url(#s8)"/><ellipse cx="10" cy="5" rx="10" ry="4" fill="#6e5a68" opacity="0.8" filter="url(#b2)"/><ellipse cx="5" cy="22" rx="8" ry="5" fill="#f0a878" opacity="0.8" filter="url(#b2)"/><ellipse cx="60" cy="10" rx="34" ry="6" fill="#b4c2d8" opacity="0.9" filter="url(#b2)"/><ellipse cx="30" cy="14" rx="18" ry="4" fill="#f0ccb0" opacity="0.85" filter="url(#b2)"/><ellipse cx="50" cy="22" rx="30" ry="3" fill="#d8c0c0" opacity="0.6" filter="url(#b2)"/><path d="M100,22 100,36 60,40 20,38 0,34 0,30 40,30 70,26Z" fill="#f0a078" opacity=".6" filter="url(#b2)"/><ellipse cx="28" cy="46" rx="26" ry="4" fill="#fff08a" opacity="1" filter="url(#b2)"/><ellipse cx="62" cy="50" rx="18" ry="3" fill="#ffe890" opacity="0.9" filter="url(#b2)"/><ellipse cx="55" cy="42" rx="14" ry="3" fill="#b8c0d0" opacity="0.75" filter="url(#b2)"/><ellipse cx="8" cy="48" rx="8" ry="4" fill="#c8a870" opacity="0.7" filter="url(#b2)"/><ellipse cx="18" cy="56" rx="14" ry="2.4" fill="#8a6a6a" opacity="0.7" filter="url(#b2)"/><ellipse cx="90" cy="50" rx="12" ry="6" fill="#70465a" opacity="0.9" filter="url(#b2)"/><ellipse cx="76" cy="44" rx="10" ry="3" fill="#f0b080" opacity="0.7" filter="url(#b2)"/><ellipse cx="40" cy="54" rx="10" ry="2" fill="#705060" opacity="0.6" filter="url(#b2)"/><rect x="0" y="0" width="100" height="60" filter="url(#nz2)" opacity="0.35" style="mix-blend-mode:overlay"/><rect width="100" height="100" fill="url(#v8)"/><path d="M0,56 2,53 4,57 7,55 9,60 13,62 15,58 24,57.5 28,59 31,61 33,56 36,58 38,62 41,57 44,56.5 46,60 50,63 54,61 57,56 60,58 64,60 68,57 72,56 78,57 80,61 84,63 88,62 92,60 96,61 98.4,60 98.8,44 99.4,44 99.6,60 100,60 100,100 0,100Z" fill="#050404" /></svg></div>
<div class="thumb" style="left:436px;top:270px;width:88.7px;height:60px;overflow:hidden;background:#000"><svg style="left:0;top:0" width="88.7" height="60" viewBox="0 0 100 100" preserveAspectRatio="none"><defs><linearGradient id="s9" x1="0" y1="0" x2="0" y2="1"><stop offset="0" stop-color="#a85a20"/><stop offset="0.3" stop-color="#cc6e22"/><stop offset="0.6" stop-color="#c8682a"/><stop offset="0.76" stop-color="#b85428"/><stop offset="0.8" stop-color="#3a2a18"/><stop offset="1" stop-color="#2a2010"/></linearGradient><radialGradient id="v9" cx="0.5" cy="0.5" r="0.78"><stop offset="0" stop-color="#000" stop-opacity="0"/><stop offset="0.62" stop-color="#000" stop-opacity="0"/><stop offset="1" stop-color="#000" stop-opacity="0.5"/></radialGradient></defs><rect width="100" height="100" fill="url(#s9)"/><path d="M56,80 26,0 100,0 100,38 74,60Z" fill="#f59c30" opacity=".95" filter="url(#b4)"/><path d="M56,76 44,0 72,0 62,40Z" fill="#f8a83c" opacity=".6" filter="url(#b4)"/><path d="M60,70 84,20 100,8 100,24 80,44Z" fill="#f8a838" opacity=".6" filter="url(#b2)"/><ellipse cx="12" cy="24" rx="17" ry="13" fill="#4a281c" opacity="0.9" filter="url(#b4)"/><ellipse cx="30" cy="8" rx="12" ry="5" fill="#6e381c" opacity="0.6" filter="url(#b4)"/><path d="M12,40 34,46 56,68 62,78 44,77 22,58Z" fill="#55301f" opacity=".9" filter="url(#b2)"/><path d="M66,72 76,52 100,36 100,76 80,78Z" fill="#683826" opacity=".85" filter="url(#b2)"/><ellipse cx="93" cy="66" rx="9" ry="6" fill="#3a3c4c" opacity="0.95" filter="url(#b2)"/><ellipse cx="96" cy="58" rx="5" ry="2.4" fill="#9aa2b4" opacity="0.55" filter="url(#b1)"/><ellipse cx="9" cy="66" rx="13" ry="6" fill="#f48c28" opacity="0.95" filter="url(#b2)"/><ellipse cx="14" cy="75" rx="14" ry="2" fill="#ffa848" opacity="0.9" filter="url(#b1)"/><ellipse cx="4" cy="52" rx="6" ry="5" fill="#8a4220" opacity="0.6" filter="url(#b2)"/><rect x="0" y="0" width="100" height="80" filter="url(#nz2)" opacity="0.3" style="mix-blend-mode:overlay"/><path d="M0,82 8,81.5 20,80 30,77.5 40,76 52,75.5 64,76.5 76,78.5 86,78 94,76.5 100,77 100,100 0,100Z" fill="#33261a" /><ellipse cx="40" cy="86" rx="40" ry="2.4" fill="#86622e" opacity="0.8" filter="url(#b1)"/><ellipse cx="80" cy="87" rx="16" ry="2" fill="#7a5a2c" opacity="0.7" filter="url(#b1)"/><ellipse cx="12" cy="90" rx="12" ry="2" fill="#6a4e28" opacity="0.7" filter="url(#b1)"/><ellipse cx="46" cy="92" rx="9" ry="3.4" fill="#20280f" opacity="0.95" filter="url(#b1)"/><ellipse cx="76" cy="92" rx="8" ry="3.4" fill="#20280f" opacity="0.95" filter="url(#b1)"/><ellipse cx="22" cy="95" rx="12" ry="2" fill="#16140a" opacity="0.85" filter="url(#b1)"/><ellipse cx="92" cy="94" rx="7" ry="3" fill="#1a200c" opacity="0.9" filter="url(#b1)"/><ellipse cx="60" cy="96" rx="10" ry="2" fill="#1a180c" opacity="0.8" filter="url(#b1)"/><rect width="100" height="100" fill="url(#v9)"/></svg></div>
<div class="thumb" style="left:209px;top:371px;width:79px;height:37px;overflow:hidden;background:#000"><svg style="left:0;top:0" width="79" height="60" viewBox="0 0 100 100" preserveAspectRatio="none"><defs><linearGradient id="s10" x1="0" y1="0" x2="0" y2="1"><stop offset="0" stop-color="#1c2028"/><stop offset="0.12" stop-color="#2a2c34"/><stop offset="0.3" stop-color="#34363c"/><stop offset="0.37" stop-color="#6e6a5c"/><stop offset="0.43" stop-color="#b4ae98"/><stop offset="0.5" stop-color="#77725f"/><stop offset="0.56" stop-color="#958868"/><stop offset="0.7" stop-color="#807868"/><stop offset="1" stop-color="#504030"/></linearGradient></defs><rect width="100" height="100" fill="url(#s10)"/><ellipse cx="66" cy="16" rx="38" ry="12" fill="#181c24" opacity="0.95" filter="url(#b2)"/><ellipse cx="42" cy="30" rx="32" ry="5" fill="#202329" opacity="0.95" filter="url(#b2)"/><ellipse cx="82" cy="34" rx="20" ry="5" fill="#1c1f26" opacity="0.9" filter="url(#b2)"/><ellipse cx="50" cy="6" rx="30" ry="4" fill="#23262e" opacity="0.9" filter="url(#b2)"/><ellipse cx="12" cy="7" rx="9" ry="2.4" fill="#7a6238" opacity="0.8" filter="url(#b2)"/><ellipse cx="20" cy="17" rx="11" ry="2.2" fill="#b08c48" opacity="0.85" filter="url(#b2)"/><ellipse cx="9" cy="23" rx="7" ry="2" fill="#d4ac60" opacity="0.9" filter="url(#b2)"/><ellipse cx="34" cy="12" rx="9" ry="2" fill="#5c5446" opacity="0.7" filter="url(#b2)"/><ellipse cx="28" cy="33" rx="12" ry="1.6" fill="#dcc48c" opacity="0.9" filter="url(#b2)"/><ellipse cx="8" cy="31" rx="6" ry="2" fill="#8a7450" opacity="0.7" filter="url(#b2)"/><ellipse cx="70" cy="9" rx="10" ry="1.4" fill="#464c5a" opacity="0.7" filter="url(#b2)"/><ellipse cx="78" cy="21" rx="9" ry="1.2" fill="#566070" opacity="0.7" filter="url(#b2)"/><ellipse cx="52" cy="22" rx="6" ry="1.2" fill="#4a5060" opacity="0.6" filter="url(#b2)"/><ellipse cx="26" cy="43" rx="26" ry="2.4" fill="#d2cab2" opacity="0.9" filter="url(#b2)"/><ellipse cx="80" cy="42" rx="20" ry="3" fill="#30333a" opacity="0.85" filter="url(#b2)"/><ellipse cx="56" cy="52" rx="24" ry="3" fill="#262830" opacity="0.95" filter="url(#b2)"/><ellipse cx="22" cy="57" rx="12" ry="1.8" fill="#d89848" opacity="0.9" filter="url(#b2)"/><ellipse cx="10" cy="50" rx="10" ry="2" fill="#a8a08a" opacity="0.7" filter="url(#b2)"/><rect x="0" y="0" width="100" height="62" filter="url(#nz)" opacity="0.3" style="mix-blend-mode:overlay"/></svg></div>
<div class="thumb" style="left:320px;top:371px;width:89px;height:37px;overflow:hidden;background:#000"><svg style="left:0;top:0" width="89" height="60" viewBox="0 0 100 100" preserveAspectRatio="none"><defs><linearGradient id="s11" x1="0" y1="0" x2="0.4" y2="1"><stop offset="0" stop-color="#27375a"/><stop offset="0.25" stop-color="#4a5a7a"/><stop offset="0.6" stop-color="#687692"/><stop offset="1" stop-color="#98a0ae"/></linearGradient><radialGradient id="r11" cx="0.5" cy="0.66" r="0.16"><stop offset="0" stop-color="#eeeeea" stop-opacity="1"/><stop offset="0.35" stop-color="#bcc2ce" stop-opacity="0.55"/><stop offset="1" stop-color="#a0acc0" stop-opacity="0"/></radialGradient></defs><rect width="100" height="100" fill="url(#s11)"/><path d="M48,66 20,0 28,0Z" fill="#c4cede" opacity=".07" filter="url(#b2)"/><path d="M48,66 40,0 46,0Z" fill="#c4cede" opacity=".07" filter="url(#b2)"/><path d="M48,66 58,0 66,0Z" fill="#c4cede" opacity=".07" filter="url(#b2)"/><path d="M48,66 78,0 90,0Z" fill="#c4cede" opacity=".07" filter="url(#b2)"/><path d="M48,66 -20,0 -5,0Z" fill="#c4cede" opacity=".07" filter="url(#b2)"/><path d="M48,66 105,0 125,0Z" fill="#c4cede" opacity=".07" filter="url(#b2)"/><path d="M0,24 60,38 100,26 100,30 60,42 0,28Z" fill="#aab6cc" opacity=".22" filter="url(#b2)"/><path d="M5,24L40,38" stroke="#2a3450" stroke-width=".8" opacity=".5"/><rect width="100" height="100" fill="url(#r11)"/><ellipse cx="5" cy="10" rx="22" ry="20" fill="#1c2a48" opacity="0.6" filter="url(#b4)"/><ellipse cx="100" cy="50" rx="10" ry="16" fill="#38445e" opacity="0.6" filter="url(#b4)"/><ellipse cx="70" cy="20" rx="26" ry="6" fill="#8a98b4" opacity="0.35" filter="url(#b4)"/></svg></div>
<div class="thumb" style="left:441px;top:371px;width:79px;height:37px;overflow:hidden;background:#000"><svg style="left:0;top:0" width="79" height="60" viewBox="0 0 100 100" preserveAspectRatio="none"><defs><linearGradient id="s12" x1="0" y1="0" x2="0" y2="1"><stop offset="0" stop-color="#4a0c06"/><stop offset="0.04" stop-color="#c8200a"/><stop offset="0.12" stop-color="#e22c0c"/><stop offset="0.19" stop-color="#ee5614"/><stop offset="0.225" stop-color="#fb8a22"/><stop offset="0.26" stop-color="#d4542c"/><stop offset="0.32" stop-color="#a84c3c"/><stop offset="0.38" stop-color="#e83a10"/><stop offset="0.43" stop-color="#f45a14"/><stop offset="0.462" stop-color="#fb8a20"/><stop offset="0.47" stop-color="#060302"/><stop offset="1" stop-color="#000"/></linearGradient></defs><rect width="100" height="100" fill="url(#s12)"/><ellipse cx="30" cy="2" rx="34" ry="1.6" fill="#40100a" opacity="0.8" filter="url(#b1)"/><ellipse cx="70" cy="9" rx="30" ry="1.4" fill="#8a1c0c" opacity="0.7" filter="url(#b1)"/><ellipse cx="20" cy="14" rx="20" ry="1.2" fill="#a02410" opacity="0.6" filter="url(#b1)"/><ellipse cx="55" cy="22.5" rx="30" ry="1.2" fill="#ffb038" opacity="0.8" filter="url(#b1)"/><ellipse cx="30" cy="31" rx="30" ry="2" fill="#8a6a60" opacity="0.7" filter="url(#b1)"/><ellipse cx="80" cy="34" rx="20" ry="1.6" fill="#a04a38" opacity="0.7" filter="url(#b1)"/><ellipse cx="12" cy="36" rx="10" ry="2" fill="#5a2a28" opacity="0.7" filter="url(#b1)"/><rect x="0" y="0" width="100" height="46" filter="url(#nz)" opacity="0.4" style="mix-blend-mode:overlay"/><path d="M0,47 8,46 14,44.5 22,46 30,46.5 40,46 50,47 58,46 64,44 70,44.5 76,43 80,45 90,45.5 100,45 100,100 0,100Z" fill="#040201" /></svg></div>
<div class="t c" style="left:192.5px;top:132px;width:112px;color:#111">2005-11-08_RemstalAbendhi</div>
<div class="t c" style="left:192.5px;top:138px;width:112px;color:#111">mmel.jpg</div>
<div class="t c" style="left:192.5px;top:145px;width:112px;color:#8c8c8c">1.2 MiB</div>
<div class="t c" style="left:308.5px;top:132px;width:112px;color:#111">2006-08-19_19-22-45_ziaja.jp</div>
<div class="t c" style="left:308.5px;top:138px;width:112px;color:#111">g</div>
<div class="t c" style="left:308.5px;top:145px;width:112px;color:#8c8c8c">396.8 KiB</div>
<div class="t c" style="left:424.5px;top:132px;width:112px;color:#111">2006-09-07AbendhimmelRem</div>
<div class="t c" style="left:424.5px;top:138px;width:112px;color:#111">stal17.jpg</div>
<div class="t c" style="left:424.5px;top:145px;width:112px;color:#8c8c8c">501.0 KiB</div>
<div class="t c" style="left:192.5px;top:233px;width:112px;color:#111">Arizona-sunset.jpg</div>
<div class="t c" style="left:192.5px;top:240px;width:112px;color:#8c8c8c">1,011.5 KiB</div>
<div class="t c" style="left:308.5px;top:233px;width:112px;color:#111">grey.jpg</div>
<div class="t c" style="left:308.5px;top:240px;width:112px;color:#8c8c8c">890.6 KiB</div>
<div class="t c" style="left:424.5px;top:233px;width:112px;color:#111">MountRainier2.JPG</div>
<div class="t c" style="left:424.5px;top:240px;width:112px;color:#8c8c8c">303.8 KiB</div>
<div class="t c" style="left:192.5px;top:334px;width:112px;color:#111">Red_sunset.jpg</div>
<div class="t c" style="left:192.5px;top:341px;width:112px;color:#8c8c8c">89.8 KiB</div>
<div class="t c" style="left:308.5px;top:334px;width:112px;color:#111">Sonnenuntergang.JPG</div>
<div class="t c" style="left:308.5px;top:341px;width:112px;color:#8c8c8c">1,018.7 KiB</div>
<div class="t c" style="left:424.5px;top:334px;width:112px;color:#111">Sunset04.jpg</div>
<div class="t c" style="left:424.5px;top:341px;width:112px;color:#8c8c8c">158.1 KiB</div>
<div style="left:547.7px;top:57.2px;width:7.1px;height:337.6px;background:linear-gradient(90deg,#a2a2a2,#b6b6b5 40%,#adadac);border-radius:1.5px;box-shadow:0 0 0 .5px #9a9a9a inset"></div>
<div style="left:548.0px;top:57.4px;width:6.5px;height:230.6px;background:linear-gradient(90deg,#c4c4c4,#e8e8e8 40%,#d2d2d2 80%,#b2b2b2);border-radius:1.5px;box-shadow:0 0 0 .5px #949494 inset"></div>
<svg style="left:548.25px;top:50.6px" width="6" height="4" viewBox="-3 -2 6 4"><path d="M-2.2,1.1L0,-1.1L2.2,1.1" fill="none" stroke="#1c1c1c" stroke-width="1.15"/></svg>
<svg style="left:548.25px;top:397.2px" width="6" height="4" viewBox="-3 -2 6 4"><path d="M-2.2,1.1L0,-1.1L2.2,1.1" fill="none" stroke="#1c1c1c" stroke-width="1.15"/></svg>
<svg style="left:548.25px;top:403px" width="6" height="4" viewBox="-3 -2 6 4"><path d="M-2.2,-1.1L0,1.1L2.2,-1.1" fill="none" stroke="#1c1c1c" stroke-width="1.15"/></svg>
<div class="t " style="left:187px;top:410.90px;">13 Files (7.3 MiB)</div>
<svg style="left:385.5px;top:411.5px" width="7" height="7" viewBox="-3 -3 7 7"><circle r="2.1" fill="#d4e4fa" stroke="#3c74c8" stroke-width="1"/><path d="M-1.2,0H1.2" stroke="#2a62b8" stroke-width=".6"/><path d="M1.5,1.5L3.4,3.4" stroke="#44506a" stroke-width="1.3"/></svg>
<div style="left:397.5px;top:414.6px;width:44px;height:.7px;background:#9c9c9c;box-shadow:0 .5px 0 #e8e8e8"></div>
<div style="left:418px;top:410.8px;width:4px;height:8.4px;border-radius:1.5px;background:linear-gradient(90deg,#d8d8d8,#fff 50%,#d0d0d0);box-shadow:0 0 0 .5px #8a8a8a"></div>
<svg style="left:446.5px;top:411.5px" width="7" height="7" viewBox="-3 -3 7 7"><circle r="2.1" fill="#d4e4fa" stroke="#3c74c8" stroke-width="1"/><path d="M-1.2,0H1.2M0,-1.2V1.2" stroke="#2a62b8" stroke-width=".6"/><path d="M1.5,1.5L3.4,3.4" stroke="#44506a" stroke-width="1.3"/></svg>
<div style="left:459px;top:410.8px;width:96px;height:8.4px;border-radius:1.5px;background:#bebebe;box-shadow:0 0 0 .5px #8f8f8f inset;overflow:hidden"><div style="left:0;top:0;width:36px;height:8.4px;background:linear-gradient(#7ab4f0,#3f8ee0);border-radius:1.5px 0 0 1.5px"></div></div>
<div class="t c" style="left:459px;top:411.5px;width:96px;color:transparent;-webkit-text-stroke:0;background:linear-gradient(90deg,#fff 36px,#111 36px);-webkit-background-clip:text;background-clip:text">522.6 GiB free</div>
<div class="panel" style="left:556.7px;top:37.2px;width:117.9px;height:384.2px"></div>
<div class="t " style="left:560px;top:38.30px;">Information</div>
<div style="left:560.30px;top:44.45px;width:1.40px;height:.5px;background:#161616"></div>
<svg style="left:655.5px;top:39.3px;filter:drop-shadow(0 .6px .5px rgba(255,255,255,.95))" width="5" height="5" viewBox="-2.5 -2.5 5 5"><path d="M0,-1.9L1.9,0L0,1.9L-1.9,0Z" fill="#2a2a2a"/><circle r=".6" fill="#e6e6e6"/></svg>
<svg style="left:665.0px;top:39.3px;filter:drop-shadow(0 .6px .5px rgba(255,255,255,.95))" width="5" height="5" viewBox="-2.5 -2.5 5 5"><path d="M-1.5,-1.5L1.5,1.5M1.5,-1.5L-1.5,1.5" stroke="#1e1e1e" stroke-width="1.1"/><rect x="-.8" y="-.8" width="1.6" height="1.6" fill="#1e1e1e"/></svg>
<div class="thumb" style="left:560px;top:50.5px;width:111.6px;height:60.2px;overflow:hidden;background:#000"><svg style="left:0;top:0" width="111.6" height="60.2" viewBox="0 0 100 100" preserveAspectRatio="none"><defs><linearGradient id="s7b" x1="0" y1="0" x2="0" y2="1"><stop offset="0" stop-color="#38435a"/><stop offset="0.12" stop-color="#4f5062"/><stop offset="0.26" stop-color="#6c4450"/><stop offset="0.4" stop-color="#a6382a"/><stop offset="0.55" stop-color="#d04222"/><stop offset="0.68" stop-color="#e24e22"/><stop offset="0.8" stop-color="#e86424"/><stop offset="1" stop-color="#a0381a"/></linearGradient><radialGradient id="v7b" cx="0.5" cy="0.5" r="0.78"><stop offset="0" stop-color="#000" stop-opacity="0"/><stop offset="0.6" stop-color="#000" stop-opacity="0"/><stop offset="1" stop-color="#000" stop-opacity="0.45"/></radialGradient></defs><rect width="100" height="100" fill="url(#s7b)"/><ellipse cx="20" cy="10" rx="20" ry="4" fill="#525c72" opacity="0.9" filter="url(#b2)"/><ellipse cx="50" cy="18" rx="26" ry="4" fill="#687284" opacity="0.8" filter="url(#b2)"/><ellipse cx="84" cy="32" rx="14" ry="4" fill="#78849a" opacity="0.85" filter="url(#b2)"/><ellipse cx="36" cy="32" rx="10" ry="2.4" fill="#a8b0bc" opacity="0.75" filter="url(#b2)"/><ellipse cx="8" cy="40" rx="8" ry="5" fill="#4a3a50" opacity="0.7" filter="url(#b2)"/><ellipse cx="60" cy="42" rx="20" ry="3.5" fill="#5a4056" opacity="0.7" filter="url(#b2)"/><ellipse cx="30" cy="50" rx="22" ry="3" fill="#6a4050" opacity="0.55" filter="url(#b2)"/><ellipse cx="68" cy="5" rx="14" ry="3" fill="#f0603c" opacity="0.95" filter="url(#b2)"/><ellipse cx="28" cy="18" rx="8" ry="2.4" fill="#f06a40" opacity="0.9" filter="url(#b2)"/><ellipse cx="12" cy="26" rx="10" ry="2.6" fill="#e8502e" opacity="0.9" filter="url(#b2)"/><ellipse cx="74" cy="40" rx="12" ry="2.4" fill="#f4643a" opacity="0.9" filter="url(#b2)"/><ellipse cx="44" cy="26" rx="12" ry="3" fill="#d84a30" opacity="0.8" filter="url(#b2)"/><ellipse cx="90" cy="16" rx="8" ry="2.4" fill="#d8503a" opacity="0.7" filter="url(#b2)"/><ellipse cx="50" cy="60" rx="50" ry="6" fill="#ef4f22" opacity="0.7" filter="url(#b2)"/><ellipse cx="88" cy="56" rx="12" ry="5" fill="#e84a28" opacity="0.7" filter="url(#b2)"/><ellipse cx="26" cy="82" rx="10" ry="3.4" fill="#ffd428" opacity="1" filter="url(#b2)"/><ellipse cx="24" cy="76" rx="18" ry="5" fill="#f88a20" opacity="0.7" filter="url(#b2)"/><ellipse cx="50" cy="70" rx="16" ry="4" fill="#f0682a" opacity="0.5" filter="url(#b2)"/><rect x="0" y="0" width="100" height="86" filter="url(#nz3)" opacity="0.6" style="mix-blend-mode:overlay"/><rect width="100" height="100" fill="url(#v7b)"/><path d="M0,76 4,78 10,82 15,83 20,84.5 28,84 36,80 46,76 56,72 60,69 64,70 68,66 74,63 78,64 82,62 88,62 94,59 100,60 100,100 0,100Z" fill="#040202" /></svg></div>
<div class="t c" style="left:560px;top:112.9px;width:111px;font-weight:bold">Red_sunset.jpg</div>
<div style="left:566px;top:122.5px;width:99px;height:.6px;background:linear-gradient(90deg,transparent,#e8e8e8 20%,#e8e8e8 80%,transparent)"></div>
<div class="lbl" style="top:126.6px">Type:</div>
<div class="val" style="top:126.6px">JPEG image</div>
<div class="lbl" style="top:135px">Size:</div>
<div class="val" style="top:135px">89.8 KiB</div>
<div class="lbl" style="top:142px">Modified:</div>
<div class="val" style="top:142px">Monday 24</div>
<div class="val" style="top:148px">November 2008</div>
<div class="lbl" style="top:157px">Rating:</div>
<div class="lbl" style="top:165px">Tags:</div>
<div class="val" style="top:165px"><a>Add Tags...</a></div>
<div class="lbl" style="top:172.2px">Comment:</div>
<div class="val" style="top:172.2px"><a>Add Comment...</a></div>
<svg style="left:617px;top:156.4px" width="30" height="6" viewBox="0 0 30 6"><path transform="translate(3.0,3)" d="M0,-2.6L.75,-.85L2.6,-.8L1.15,.4L1.6,2.2L0,1.2L-1.6,2.2L-1.15,.4L-2.6,-.8L-.75,-.85Z" fill="#dedede" stroke="#a4a4a4" stroke-width=".35"/><path transform="translate(8.6,3)" d="M0,-2.6L.75,-.85L2.6,-.8L1.15,.4L1.6,2.2L0,1.2L-1.6,2.2L-1.15,.4L-2.6,-.8L-.75,-.85Z" fill="#dedede" stroke="#a4a4a4" stroke-width=".35"/><path transform="translate(14.2,3)" d="M0,-2.6L.75,-.85L2.6,-.8L1.15,.4L1.6,2.2L0,1.2L-1.6,2.2L-1.15,.4L-2.6,-.8L-.75,-.85Z" fill="#dedede" stroke="#a4a4a4" stroke-width=".35"/><path transform="translate(19.799999999999997,3)" d="M0,-2.6L.75,-.85L2.6,-.8L1.15,.4L1.6,2.2L0,1.2L-1.6,2.2L-1.15,.4L-2.6,-.8L-.75,-.85Z" fill="#dedede" stroke="#a4a4a4" stroke-width=".35"/><path transform="translate(25.4,3)" d="M0,-2.6L.75,-.85L2.6,-.8L1.15,.4L1.6,2.2L0,1.2L-1.6,2.2L-1.15,.4L-2.6,-.8L-.75,-.85Z" fill="#dedede" stroke="#a4a4a4" stroke-width=".35"/></svg>
</body></html>
